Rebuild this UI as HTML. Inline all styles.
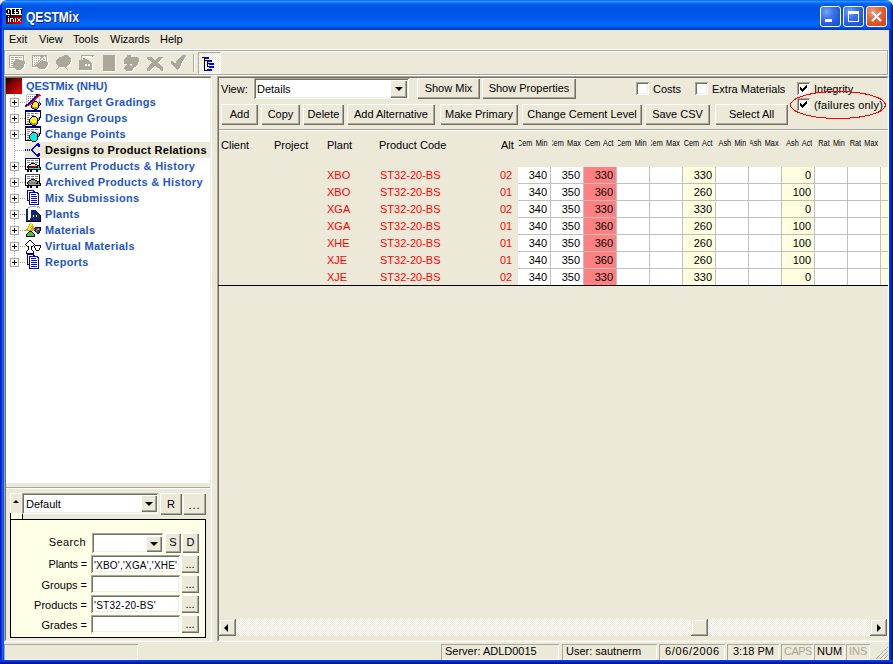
<!DOCTYPE html>
<html><head><meta charset="utf-8">
<style>
*{box-sizing:border-box;margin:0;padding:0}
html,body{width:893px;height:664px;overflow:hidden;background:#ECE9D8}
body{position:relative;font-family:"Liberation Sans",sans-serif;font-size:11px;color:#000}
.a{position:absolute}
.t{position:absolute;white-space:nowrap;line-height:13px}
/* XP button */
.btn{position:absolute;background:#ECE9D8;border:1px solid;border-color:#fff #716F64 #716F64 #fff;box-shadow:inset -1px -1px #ACA899;text-align:center;line-height:18px;white-space:nowrap}
.sunk{position:absolute;border:1px solid;border-color:#ACA899 #fff #fff #ACA899;}
.sunk>.in{position:absolute;left:0;top:0;right:0;bottom:0;border:1px solid;border-color:#716F64 #F1EFE2 #F1EFE2 #716F64;background:#fff}
.chk{position:absolute;width:13px;height:13px;border:1px solid #1C5180;background:#fff}

.ed{position:absolute;background:#fff;box-shadow:inset 1px 1px #ACA899,inset -1px -1px #fff,inset 2px 2px #716F64,inset -2px -2px #F1EFE2}
.rb{position:absolute;background:#ECE9D8;box-shadow:inset 1px 1px #fff,inset -1px -1px #716F64,inset -2px -2px #ACA899;text-align:center;white-space:nowrap}
.arr{position:absolute;width:0;height:0;border-left:4px solid transparent;border-right:4px solid transparent;border-top:4px solid #000}
.lab{position:absolute;white-space:nowrap;line-height:13px;text-align:right}

.cb{position:absolute;width:13px;height:13px;background:#fff;box-shadow:inset 1px 1px #ACA899,inset -1px -1px #fff,inset 2px 2px #716F64,inset -2px -2px #F1EFE2}

.sb{position:absolute;top:644px;height:16px;box-shadow:inset 1px 1px #ACA899,inset -1px -1px #fff;white-space:nowrap;line-height:14px;padding-left:4px}
.scb{position:absolute;background:#ECE9D8;box-shadow:inset -1px -1px #716F64,inset 1px 1px #ECE9D8,inset -2px -2px #ACA899,inset 2px 2px #fff}
</style></head><body>

<!-- window frame -->
<div class="a" style="left:0;top:30px;width:4px;height:634px;background:linear-gradient(to right,#0019CF 0,#0019CF 1px,#0831D9 1px,#0831D9 2px,#166AEE 2px,#166AEE 3px,#0855DD 3px)"></div>
<div class="a" style="left:889px;top:30px;width:4px;height:634px;background:linear-gradient(to right,#0040F0 0,#0040F0 1px,#0030D8 1px,#0030D8 2px,#001EA0 2px,#001EA0 3px,#00138C 3px)"></div>
<div class="a" style="left:0;top:660px;width:893px;height:4px;background:linear-gradient(to bottom,#0040F0 0,#0040F0 1px,#0035E0 1px,#0035E0 2px,#001EA0 2px,#001EA0 3px,#00138C 3px)"></div>

<!-- title bar -->
<div class="a" style="left:0;top:0;width:893px;height:30px;border-radius:7px 7px 0 0;background:linear-gradient(to bottom,#0058ee 0%,#3593ff 4%,#288eff 6%,#127dff 8%,#036ffc 10%,#0262ee 14%,#0057e5 20%,#0054e3 24%,#0055eb 56%,#005bf5 66%,#026afe 76%,#0062ef 86%,#0055E0 92%,#0044D0 95%,#0038C0 100%)"></div>
<div class="a" style="left:0;top:4px;width:3px;height:26px;border-top-left-radius:3px;background:linear-gradient(to right,#0022D2 0,#0022D2 2px,#0550E6 2px)"></div>
<div class="a" style="left:890px;top:4px;width:3px;height:26px;border-top-right-radius:3px;background:linear-gradient(to right,#0040E0 0,#0040E0 1px,#0028B8 1px,#0028B8 2px,#001890 2px)"></div>
<div id="title" class="t" style="left:26px;top:9px;font-size:14px;font-weight:bold;color:#fff;line-height:17px;text-shadow:1px 1px #0A1883;transform:scaleX(0.86);transform-origin:0 0">QESTMix</div>

<!-- title icon -->
<svg class="a" style="left:6px;top:8px" width="16" height="16" shape-rendering="crispEdges"><defs><linearGradient id="rg" x1="0" y1="0" x2="1" y2="1"><stop offset="0" stop-color="#100000"/><stop offset=".5" stop-color="#800000"/><stop offset="1" stop-color="#FF0000"/></linearGradient></defs><rect x="0" y="0" width="16" height="7" fill="#fff"/><rect x="0" y="7" width="16" height="9" fill="url(#rg)"/><rect x="1" y="1" width="1" height="1" fill="#000"/><rect x="2" y="1" width="1" height="1" fill="#000"/><rect x="3" y="1" width="1" height="1" fill="#000"/><rect x="6" y="1" width="1" height="1" fill="#000"/><rect x="7" y="1" width="1" height="1" fill="#000"/><rect x="8" y="1" width="1" height="1" fill="#000"/><rect x="10" y="1" width="1" height="1" fill="#000"/><rect x="11" y="1" width="1" height="1" fill="#000"/><rect x="12" y="1" width="1" height="1" fill="#000"/><rect x="14" y="1" width="1" height="1" fill="#000"/><rect x="15" y="1" width="1" height="1" fill="#000"/><rect x="0" y="2" width="1" height="1" fill="#000"/><rect x="1" y="2" width="1" height="1" fill="#000"/><rect x="3" y="2" width="1" height="1" fill="#000"/><rect x="4" y="2" width="1" height="1" fill="#000"/><rect x="6" y="2" width="1" height="1" fill="#000"/><rect x="7" y="2" width="1" height="1" fill="#000"/><rect x="10" y="2" width="1" height="1" fill="#000"/><rect x="11" y="2" width="1" height="1" fill="#000"/><rect x="15" y="2" width="1" height="1" fill="#000"/><rect x="0" y="3" width="1" height="1" fill="#000"/><rect x="1" y="3" width="1" height="1" fill="#000"/><rect x="3" y="3" width="1" height="1" fill="#000"/><rect x="4" y="3" width="1" height="1" fill="#000"/><rect x="6" y="3" width="1" height="1" fill="#000"/><rect x="7" y="3" width="1" height="1" fill="#000"/><rect x="8" y="3" width="1" height="1" fill="#000"/><rect x="10" y="3" width="1" height="1" fill="#000"/><rect x="11" y="3" width="1" height="1" fill="#000"/><rect x="12" y="3" width="1" height="1" fill="#000"/><rect x="15" y="3" width="1" height="1" fill="#000"/><rect x="0" y="4" width="1" height="1" fill="#000"/><rect x="1" y="4" width="1" height="1" fill="#000"/><rect x="3" y="4" width="1" height="1" fill="#000"/><rect x="4" y="4" width="1" height="1" fill="#000"/><rect x="6" y="4" width="1" height="1" fill="#000"/><rect x="7" y="4" width="1" height="1" fill="#000"/><rect x="12" y="4" width="1" height="1" fill="#000"/><rect x="15" y="4" width="1" height="1" fill="#000"/><rect x="1" y="5" width="1" height="1" fill="#000"/><rect x="2" y="5" width="1" height="1" fill="#000"/><rect x="3" y="5" width="1" height="1" fill="#000"/><rect x="4" y="5" width="1" height="1" fill="#000"/><rect x="6" y="5" width="1" height="1" fill="#000"/><rect x="7" y="5" width="1" height="1" fill="#000"/><rect x="8" y="5" width="1" height="1" fill="#000"/><rect x="10" y="5" width="1" height="1" fill="#000"/><rect x="11" y="5" width="1" height="1" fill="#000"/><rect x="12" y="5" width="1" height="1" fill="#000"/><rect x="15" y="5" width="1" height="1" fill="#000"/><rect x="4" y="6" width="1" height="1" fill="#000"/><rect x="2" y="8" width="1" height="1" fill="#fff"/><rect x="2" y="10" width="1" height="1" fill="#fff"/><rect x="4" y="10" width="1" height="1" fill="#fff"/><rect x="5" y="10" width="1" height="1" fill="#fff"/><rect x="6" y="10" width="1" height="1" fill="#fff"/><rect x="9" y="10" width="1" height="1" fill="#fff"/><rect x="11" y="10" width="1" height="1" fill="#fff"/><rect x="14" y="10" width="1" height="1" fill="#fff"/><rect x="2" y="11" width="1" height="1" fill="#fff"/><rect x="4" y="11" width="1" height="1" fill="#fff"/><rect x="7" y="11" width="1" height="1" fill="#fff"/><rect x="9" y="11" width="1" height="1" fill="#fff"/><rect x="12" y="11" width="1" height="1" fill="#fff"/><rect x="13" y="11" width="1" height="1" fill="#fff"/><rect x="2" y="12" width="1" height="1" fill="#fff"/><rect x="4" y="12" width="1" height="1" fill="#fff"/><rect x="7" y="12" width="1" height="1" fill="#fff"/><rect x="9" y="12" width="1" height="1" fill="#fff"/><rect x="12" y="12" width="1" height="1" fill="#fff"/><rect x="13" y="12" width="1" height="1" fill="#fff"/><rect x="2" y="13" width="1" height="1" fill="#fff"/><rect x="4" y="13" width="1" height="1" fill="#fff"/><rect x="7" y="13" width="1" height="1" fill="#fff"/><rect x="9" y="13" width="1" height="1" fill="#fff"/><rect x="11" y="13" width="1" height="1" fill="#fff"/><rect x="14" y="13" width="1" height="1" fill="#fff"/></svg>
<!-- title buttons -->
<div class="a" style="left:820px;top:6px;width:21px;height:21px;border:1px solid #fff;border-radius:3px;background:radial-gradient(circle at 30% 25%,#7AA6F8 0,#3C74EC 35%,#2258E0 70%,#1A4CD8 100%)">
  <div class="a" style="left:4px;top:12px;width:7px;height:3px;background:#fff"></div></div>
<div class="a" style="left:843px;top:6px;width:21px;height:21px;border:1px solid #fff;border-radius:3px;background:radial-gradient(circle at 30% 25%,#7AA6F8 0,#3C74EC 35%,#2258E0 70%,#1A4CD8 100%)">
  <div class="a" style="left:4px;top:4px;width:11px;height:11px;border:1px solid #fff;border-top-width:3px"></div></div>
<div class="a" style="left:866px;top:6px;width:21px;height:21px;border:1px solid #fff;border-radius:3px;background:radial-gradient(circle at 30% 25%,#F0A080 0,#E66A42 35%,#D8502A 70%,#C84420 100%)">
  <svg class="a" style="left:0;top:0" width="19" height="19"><path d="M5 5L14 14M14 5L5 14" stroke="#fff" stroke-width="2.2"/></svg></div>

<!-- menu -->
<div class="t" style="left:9px;top:33px">Exit</div>
<div class="t" style="left:39px;top:33px">View</div>
<div class="t" style="left:73px;top:33px">Tools</div>
<div class="t" style="left:110px;top:33px">Wizards</div>
<div class="t" style="left:160px;top:33px">Help</div>
<div class="a" style="left:4px;top:49px;width:885px;height:1px;background:#fff"></div>

<!-- toolbar -->
<div class="a" style="left:4px;top:50px;width:884px;height:25px;border:1px solid #ACA899;box-shadow:inset 1px 1px #fff,1px 1px #fff"></div>
<div class="a" style="left:198px;top:52px;width:23px;height:22px;border:1px solid;border-color:#ACA899 #fff #fff #ACA899;background-color:#F4F2E8;background-image:repeating-conic-gradient(#fff 0 25%,#ECE9D8 0 50%);background-size:2px 2px"></div>
<svg class="a" style="left:0;top:50px" width="230" height="26">
<g shape-rendering="crispEdges"><rect x="10" y="6" width="15" height="1" fill="#fff"/><rect x="10" y="7" width="15" height="1" fill="#fff"/><rect x="10" y="8" width="15" height="1" fill="#fff"/><rect x="10" y="9" width="15" height="1" fill="#fff"/><rect x="10" y="10" width="15" height="1" fill="#fff"/><rect x="10" y="11" width="15" height="1" fill="#fff"/><rect x="10" y="12" width="16" height="1" fill="#fff"/><rect x="10" y="13" width="16" height="1" fill="#fff"/><rect x="10" y="14" width="16" height="1" fill="#fff"/><rect x="10" y="15" width="15" height="1" fill="#fff"/><rect x="10" y="16" width="15" height="1" fill="#fff"/><rect x="10" y="17" width="15" height="1" fill="#fff"/><rect x="10" y="18" width="14" height="1" fill="#fff"/><rect x="16" y="19" width="7" height="1" fill="#fff"/><rect x="17" y="20" width="5" height="1" fill="#fff"/><rect x="9" y="5" width="15" height="1" fill="#ACA899"/><rect x="9" y="6" width="1" height="1" fill="#ACA899"/><rect x="10" y="6" width="13" height="1" fill="#fff"/><rect x="23" y="6" width="1" height="1" fill="#ACA899"/><rect x="9" y="7" width="1" height="1" fill="#ACA899"/><rect x="10" y="7" width="1" height="1" fill="#fff"/><rect x="11" y="7" width="3" height="1" fill="#ACA899"/><rect x="14" y="7" width="1" height="1" fill="#fff"/><rect x="15" y="7" width="3" height="1" fill="#ACA899"/><rect x="18" y="7" width="1" height="1" fill="#fff"/><rect x="19" y="7" width="3" height="1" fill="#ACA899"/><rect x="22" y="7" width="1" height="1" fill="#fff"/><rect x="23" y="7" width="1" height="1" fill="#ACA899"/><rect x="9" y="8" width="1" height="1" fill="#ACA899"/><rect x="10" y="8" width="13" height="1" fill="#fff"/><rect x="23" y="8" width="1" height="1" fill="#ACA899"/><rect x="9" y="9" width="1" height="1" fill="#ACA899"/><rect x="10" y="9" width="1" height="1" fill="#fff"/><rect x="11" y="9" width="3" height="1" fill="#ACA899"/><rect x="14" y="9" width="1" height="1" fill="#fff"/><rect x="15" y="9" width="4" height="1" fill="#ACA899"/><rect x="19" y="9" width="4" height="1" fill="#fff"/><rect x="23" y="9" width="1" height="1" fill="#ACA899"/><rect x="9" y="10" width="1" height="1" fill="#ACA899"/><rect x="10" y="10" width="5" height="1" fill="#fff"/><rect x="15" y="10" width="7" height="1" fill="#ACA899"/><rect x="22" y="10" width="1" height="1" fill="#fff"/><rect x="23" y="10" width="1" height="1" fill="#ACA899"/><rect x="9" y="11" width="1" height="1" fill="#ACA899"/><rect x="10" y="11" width="1" height="1" fill="#fff"/><rect x="11" y="11" width="2" height="1" fill="#ACA899"/><rect x="13" y="11" width="1" height="1" fill="#fff"/><rect x="14" y="11" width="11" height="1" fill="#ACA899"/><rect x="9" y="12" width="1" height="1" fill="#ACA899"/><rect x="10" y="12" width="3" height="1" fill="#fff"/><rect x="13" y="12" width="12" height="1" fill="#ACA899"/><rect x="9" y="13" width="1" height="1" fill="#ACA899"/><rect x="10" y="13" width="1" height="1" fill="#fff"/><rect x="11" y="13" width="14" height="1" fill="#ACA899"/><rect x="9" y="14" width="1" height="1" fill="#ACA899"/><rect x="10" y="14" width="3" height="1" fill="#fff"/><rect x="13" y="14" width="11" height="1" fill="#ACA899"/><rect x="9" y="15" width="1" height="1" fill="#ACA899"/><rect x="10" y="15" width="1" height="1" fill="#fff"/><rect x="11" y="15" width="13" height="1" fill="#ACA899"/><rect x="9" y="16" width="1" height="1" fill="#ACA899"/><rect x="10" y="16" width="3" height="1" fill="#fff"/><rect x="13" y="16" width="11" height="1" fill="#ACA899"/><rect x="9" y="17" width="14" height="1" fill="#ACA899"/><rect x="15" y="18" width="7" height="1" fill="#ACA899"/><rect x="16" y="19" width="5" height="1" fill="#ACA899"/><rect x="33" y="6" width="15" height="1" fill="#fff"/><rect x="33" y="7" width="15" height="1" fill="#fff"/><rect x="33" y="8" width="15" height="1" fill="#fff"/><rect x="33" y="9" width="15" height="1" fill="#fff"/><rect x="33" y="10" width="15" height="1" fill="#fff"/><rect x="33" y="11" width="15" height="1" fill="#fff"/><rect x="33" y="12" width="15" height="1" fill="#fff"/><rect x="33" y="13" width="16" height="1" fill="#fff"/><rect x="33" y="14" width="16" height="1" fill="#fff"/><rect x="33" y="15" width="16" height="1" fill="#fff"/><rect x="33" y="16" width="15" height="1" fill="#fff"/><rect x="33" y="17" width="15" height="1" fill="#fff"/><rect x="39" y="18" width="8" height="1" fill="#fff"/><rect x="40" y="19" width="6" height="1" fill="#fff"/><rect x="32" y="5" width="15" height="1" fill="#ACA899"/><rect x="32" y="6" width="1" height="1" fill="#ACA899"/><rect x="33" y="6" width="1" height="1" fill="#fff"/><rect x="34" y="6" width="1" height="1" fill="#ACA899"/><rect x="35" y="6" width="1" height="1" fill="#fff"/><rect x="36" y="6" width="1" height="1" fill="#ACA899"/><rect x="37" y="6" width="1" height="1" fill="#fff"/><rect x="38" y="6" width="1" height="1" fill="#ACA899"/><rect x="39" y="6" width="1" height="1" fill="#fff"/><rect x="40" y="6" width="4" height="1" fill="#ACA899"/><rect x="44" y="6" width="1" height="1" fill="#fff"/><rect x="45" y="6" width="2" height="1" fill="#ACA899"/><rect x="32" y="7" width="1" height="1" fill="#ACA899"/><rect x="33" y="7" width="8" height="1" fill="#fff"/><rect x="41" y="7" width="2" height="1" fill="#ACA899"/><rect x="43" y="7" width="3" height="1" fill="#fff"/><rect x="46" y="7" width="1" height="1" fill="#ACA899"/><rect x="32" y="8" width="1" height="1" fill="#ACA899"/><rect x="33" y="8" width="1" height="1" fill="#fff"/><rect x="34" y="8" width="1" height="1" fill="#ACA899"/><rect x="35" y="8" width="1" height="1" fill="#fff"/><rect x="36" y="8" width="1" height="1" fill="#ACA899"/><rect x="37" y="8" width="1" height="1" fill="#fff"/><rect x="38" y="8" width="1" height="1" fill="#ACA899"/><rect x="39" y="8" width="1" height="1" fill="#fff"/><rect x="40" y="8" width="2" height="1" fill="#ACA899"/><rect x="42" y="8" width="1" height="1" fill="#fff"/><rect x="43" y="8" width="1" height="1" fill="#ACA899"/><rect x="44" y="8" width="2" height="1" fill="#fff"/><rect x="46" y="8" width="1" height="1" fill="#ACA899"/><rect x="32" y="9" width="1" height="1" fill="#ACA899"/><rect x="33" y="9" width="7" height="1" fill="#fff"/><rect x="40" y="9" width="1" height="1" fill="#ACA899"/><rect x="41" y="9" width="2" height="1" fill="#fff"/><rect x="43" y="9" width="2" height="1" fill="#ACA899"/><rect x="45" y="9" width="1" height="1" fill="#fff"/><rect x="46" y="9" width="1" height="1" fill="#ACA899"/><rect x="32" y="10" width="1" height="1" fill="#ACA899"/><rect x="33" y="10" width="1" height="1" fill="#fff"/><rect x="34" y="10" width="1" height="1" fill="#ACA899"/><rect x="35" y="10" width="1" height="1" fill="#fff"/><rect x="36" y="10" width="1" height="1" fill="#ACA899"/><rect x="37" y="10" width="1" height="1" fill="#fff"/><rect x="38" y="10" width="2" height="1" fill="#ACA899"/><rect x="40" y="10" width="1" height="1" fill="#fff"/><rect x="41" y="10" width="2" height="1" fill="#ACA899"/><rect x="43" y="10" width="3" height="1" fill="#fff"/><rect x="46" y="10" width="1" height="1" fill="#ACA899"/><rect x="32" y="11" width="1" height="1" fill="#ACA899"/><rect x="33" y="11" width="5" height="1" fill="#fff"/><rect x="38" y="11" width="1" height="1" fill="#ACA899"/><rect x="39" y="11" width="1" height="1" fill="#fff"/><rect x="40" y="11" width="7" height="1" fill="#ACA899"/><rect x="32" y="12" width="1" height="1" fill="#ACA899"/><rect x="33" y="12" width="1" height="1" fill="#fff"/><rect x="34" y="12" width="1" height="1" fill="#ACA899"/><rect x="35" y="12" width="1" height="1" fill="#fff"/><rect x="36" y="12" width="2" height="1" fill="#ACA899"/><rect x="38" y="12" width="1" height="1" fill="#fff"/><rect x="39" y="12" width="9" height="1" fill="#ACA899"/><rect x="32" y="13" width="1" height="1" fill="#ACA899"/><rect x="33" y="13" width="2" height="1" fill="#fff"/><rect x="35" y="13" width="1" height="1" fill="#ACA899"/><rect x="36" y="13" width="1" height="1" fill="#fff"/><rect x="37" y="13" width="11" height="1" fill="#ACA899"/><rect x="32" y="14" width="1" height="1" fill="#ACA899"/><rect x="33" y="14" width="1" height="1" fill="#fff"/><rect x="34" y="14" width="1" height="1" fill="#ACA899"/><rect x="35" y="14" width="1" height="1" fill="#fff"/><rect x="36" y="14" width="12" height="1" fill="#ACA899"/><rect x="32" y="15" width="1" height="1" fill="#ACA899"/><rect x="33" y="15" width="2" height="1" fill="#fff"/><rect x="35" y="15" width="12" height="1" fill="#ACA899"/><rect x="32" y="16" width="15" height="1" fill="#ACA899"/><rect x="38" y="17" width="8" height="1" fill="#ACA899"/><rect x="39" y="18" width="6" height="1" fill="#ACA899"/><rect x="65" y="6" width="4" height="1" fill="#fff"/><rect x="63" y="7" width="7" height="1" fill="#fff"/><rect x="60" y="8" width="11" height="1" fill="#fff"/><rect x="59" y="9" width="13" height="1" fill="#fff"/><rect x="58" y="10" width="14" height="1" fill="#fff"/><rect x="57" y="11" width="15" height="1" fill="#fff"/><rect x="57" y="12" width="15" height="1" fill="#fff"/><rect x="57" y="13" width="14" height="1" fill="#fff"/><rect x="57" y="14" width="14" height="1" fill="#fff"/><rect x="58" y="15" width="12" height="1" fill="#fff"/><rect x="59" y="16" width="10" height="1" fill="#fff"/><rect x="59" y="17" width="9" height="1" fill="#fff"/><rect x="59" y="18" width="1" height="1" fill="#fff"/><rect x="66" y="18" width="1" height="1" fill="#fff"/><rect x="58" y="19" width="1" height="1" fill="#fff"/><rect x="67" y="19" width="1" height="1" fill="#fff"/><rect x="57" y="20" width="1" height="1" fill="#fff"/><rect x="68" y="20" width="1" height="1" fill="#fff"/><rect x="64" y="5" width="4" height="1" fill="#ACA899"/><rect x="62" y="6" width="7" height="1" fill="#ACA899"/><rect x="59" y="7" width="11" height="1" fill="#ACA899"/><rect x="58" y="8" width="13" height="1" fill="#ACA899"/><rect x="57" y="9" width="14" height="1" fill="#ACA899"/><rect x="56" y="10" width="15" height="1" fill="#ACA899"/><rect x="56" y="11" width="15" height="1" fill="#ACA899"/><rect x="56" y="12" width="14" height="1" fill="#ACA899"/><rect x="56" y="13" width="14" height="1" fill="#ACA899"/><rect x="57" y="14" width="12" height="1" fill="#ACA899"/><rect x="58" y="15" width="10" height="1" fill="#ACA899"/><rect x="58" y="16" width="9" height="1" fill="#ACA899"/><rect x="58" y="17" width="1" height="1" fill="#ACA899"/><rect x="65" y="17" width="1" height="1" fill="#ACA899"/><rect x="57" y="18" width="1" height="1" fill="#ACA899"/><rect x="66" y="18" width="1" height="1" fill="#ACA899"/><rect x="56" y="19" width="1" height="1" fill="#ACA899"/><rect x="67" y="19" width="1" height="1" fill="#ACA899"/><rect x="82" y="6" width="13" height="1" fill="#fff"/><rect x="82" y="7" width="12" height="1" fill="#fff"/><rect x="82" y="8" width="1" height="1" fill="#fff"/><rect x="82" y="9" width="1" height="1" fill="#fff"/><rect x="84" y="9" width="2" height="1" fill="#fff"/><rect x="82" y="10" width="1" height="1" fill="#fff"/><rect x="84" y="10" width="4" height="1" fill="#fff"/><rect x="80" y="11" width="10" height="1" fill="#fff"/><rect x="80" y="12" width="11" height="1" fill="#fff"/><rect x="80" y="13" width="12" height="1" fill="#fff"/><rect x="80" y="14" width="13" height="1" fill="#fff"/><rect x="80" y="15" width="13" height="1" fill="#fff"/><rect x="80" y="16" width="13" height="1" fill="#fff"/><rect x="80" y="17" width="13" height="1" fill="#fff"/><rect x="80" y="18" width="13" height="1" fill="#fff"/><rect x="80" y="19" width="13" height="1" fill="#fff"/><rect x="80" y="20" width="13" height="1" fill="#fff"/><rect x="81" y="5" width="13" height="1" fill="#ACA899"/><rect x="81" y="6" width="1" height="1" fill="#ACA899"/><rect x="82" y="6" width="10" height="1" fill="#fff"/><rect x="92" y="6" width="1" height="1" fill="#ACA899"/><rect x="81" y="7" width="1" height="1" fill="#ACA899"/><rect x="81" y="8" width="1" height="1" fill="#ACA899"/><rect x="83" y="8" width="2" height="1" fill="#ACA899"/><rect x="81" y="9" width="1" height="1" fill="#ACA899"/><rect x="83" y="9" width="4" height="1" fill="#ACA899"/><rect x="79" y="10" width="10" height="1" fill="#ACA899"/><rect x="79" y="11" width="11" height="1" fill="#ACA899"/><rect x="79" y="12" width="12" height="1" fill="#ACA899"/><rect x="79" y="13" width="13" height="1" fill="#ACA899"/><rect x="79" y="14" width="6" height="1" fill="#ACA899"/><rect x="85" y="14" width="2" height="1" fill="#fff"/><rect x="87" y="14" width="1" height="1" fill="#ACA899"/><rect x="88" y="14" width="2" height="1" fill="#fff"/><rect x="90" y="14" width="2" height="1" fill="#ACA899"/><rect x="79" y="15" width="6" height="1" fill="#ACA899"/><rect x="85" y="15" width="2" height="1" fill="#fff"/><rect x="87" y="15" width="1" height="1" fill="#ACA899"/><rect x="88" y="15" width="2" height="1" fill="#fff"/><rect x="90" y="15" width="2" height="1" fill="#ACA899"/><rect x="79" y="16" width="13" height="1" fill="#ACA899"/><rect x="79" y="17" width="13" height="1" fill="#ACA899"/><rect x="79" y="18" width="13" height="1" fill="#ACA899"/><rect x="79" y="19" width="13" height="1" fill="#ACA899"/><rect x="104" y="6" width="12" height="1" fill="#fff"/><rect x="104" y="7" width="12" height="1" fill="#fff"/><rect x="104" y="8" width="12" height="1" fill="#fff"/><rect x="104" y="9" width="12" height="1" fill="#fff"/><rect x="104" y="10" width="12" height="1" fill="#fff"/><rect x="104" y="11" width="12" height="1" fill="#fff"/><rect x="104" y="12" width="12" height="1" fill="#fff"/><rect x="104" y="13" width="12" height="1" fill="#fff"/><rect x="104" y="14" width="12" height="1" fill="#fff"/><rect x="104" y="15" width="12" height="1" fill="#fff"/><rect x="104" y="16" width="12" height="1" fill="#fff"/><rect x="104" y="17" width="12" height="1" fill="#fff"/><rect x="104" y="18" width="12" height="1" fill="#fff"/><rect x="104" y="19" width="12" height="1" fill="#fff"/><rect x="104" y="20" width="12" height="1" fill="#fff"/><rect x="104" y="21" width="12" height="1" fill="#fff"/><rect x="103" y="5" width="12" height="1" fill="#ACA899"/><rect x="103" y="6" width="12" height="1" fill="#ACA899"/><rect x="103" y="7" width="12" height="1" fill="#ACA899"/><rect x="103" y="8" width="12" height="1" fill="#ACA899"/><rect x="103" y="9" width="12" height="1" fill="#ACA899"/><rect x="103" y="10" width="12" height="1" fill="#ACA899"/><rect x="103" y="11" width="12" height="1" fill="#ACA899"/><rect x="103" y="12" width="12" height="1" fill="#ACA899"/><rect x="103" y="13" width="12" height="1" fill="#ACA899"/><rect x="103" y="14" width="12" height="1" fill="#ACA899"/><rect x="103" y="15" width="12" height="1" fill="#ACA899"/><rect x="103" y="16" width="12" height="1" fill="#ACA899"/><rect x="103" y="17" width="12" height="1" fill="#ACA899"/><rect x="103" y="18" width="12" height="1" fill="#ACA899"/><rect x="103" y="19" width="12" height="1" fill="#ACA899"/><rect x="103" y="20" width="12" height="1" fill="#ACA899"/><rect x="128" y="6" width="4" height="1" fill="#fff"/><rect x="128" y="7" width="4" height="1" fill="#fff"/><rect x="127" y="8" width="12" height="1" fill="#fff"/><rect x="126" y="9" width="14" height="1" fill="#fff"/><rect x="125" y="10" width="15" height="1" fill="#fff"/><rect x="125" y="11" width="15" height="1" fill="#fff"/><rect x="125" y="12" width="15" height="1" fill="#fff"/><rect x="125" y="13" width="14" height="1" fill="#fff"/><rect x="125" y="14" width="14" height="1" fill="#fff"/><rect x="128" y="15" width="3" height="1" fill="#fff"/><rect x="133" y="15" width="6" height="1" fill="#fff"/><rect x="127" y="16" width="5" height="1" fill="#fff"/><rect x="133" y="16" width="5" height="1" fill="#fff"/><rect x="126" y="17" width="11" height="1" fill="#fff"/><rect x="125" y="18" width="10" height="1" fill="#fff"/><rect x="125" y="19" width="9" height="1" fill="#fff"/><rect x="126" y="20" width="8" height="1" fill="#fff"/><rect x="127" y="21" width="6" height="1" fill="#fff"/><rect x="127" y="5" width="4" height="1" fill="#ACA899"/><rect x="127" y="6" width="4" height="1" fill="#ACA899"/><rect x="126" y="7" width="12" height="1" fill="#ACA899"/><rect x="125" y="8" width="14" height="1" fill="#ACA899"/><rect x="124" y="9" width="15" height="1" fill="#ACA899"/><rect x="124" y="10" width="15" height="1" fill="#ACA899"/><rect x="124" y="11" width="15" height="1" fill="#ACA899"/><rect x="124" y="12" width="14" height="1" fill="#ACA899"/><rect x="124" y="13" width="14" height="1" fill="#ACA899"/><rect x="127" y="14" width="3" height="1" fill="#ACA899"/><rect x="132" y="14" width="6" height="1" fill="#ACA899"/><rect x="126" y="15" width="5" height="1" fill="#ACA899"/><rect x="132" y="15" width="5" height="1" fill="#ACA899"/><rect x="125" y="16" width="11" height="1" fill="#ACA899"/><rect x="124" y="17" width="10" height="1" fill="#ACA899"/><rect x="124" y="18" width="9" height="1" fill="#ACA899"/><rect x="125" y="19" width="8" height="1" fill="#ACA899"/><rect x="126" y="20" width="6" height="1" fill="#ACA899"/><rect x="148" y="8" width="5" height="1" fill="#fff"/><rect x="159" y="8" width="5" height="1" fill="#fff"/><rect x="148" y="9" width="6" height="1" fill="#fff"/><rect x="158" y="9" width="5" height="1" fill="#fff"/><rect x="149" y="10" width="6" height="1" fill="#fff"/><rect x="157" y="10" width="5" height="1" fill="#fff"/><rect x="151" y="11" width="10" height="1" fill="#fff"/><rect x="152" y="12" width="8" height="1" fill="#fff"/><rect x="153" y="13" width="6" height="1" fill="#fff"/><rect x="152" y="14" width="8" height="1" fill="#fff"/><rect x="151" y="15" width="10" height="1" fill="#fff"/><rect x="150" y="16" width="12" height="1" fill="#fff"/><rect x="150" y="17" width="5" height="1" fill="#fff"/><rect x="157" y="17" width="6" height="1" fill="#fff"/><rect x="149" y="18" width="5" height="1" fill="#fff"/><rect x="158" y="18" width="6" height="1" fill="#fff"/><rect x="148" y="19" width="5" height="1" fill="#fff"/><rect x="160" y="19" width="4" height="1" fill="#fff"/><rect x="148" y="20" width="4" height="1" fill="#fff"/><rect x="161" y="20" width="3" height="1" fill="#fff"/><rect x="148" y="21" width="3" height="1" fill="#fff"/><rect x="162" y="21" width="2" height="1" fill="#fff"/><rect x="147" y="7" width="5" height="1" fill="#ACA899"/><rect x="158" y="7" width="5" height="1" fill="#ACA899"/><rect x="147" y="8" width="6" height="1" fill="#ACA899"/><rect x="157" y="8" width="5" height="1" fill="#ACA899"/><rect x="148" y="9" width="6" height="1" fill="#ACA899"/><rect x="156" y="9" width="5" height="1" fill="#ACA899"/><rect x="150" y="10" width="10" height="1" fill="#ACA899"/><rect x="151" y="11" width="8" height="1" fill="#ACA899"/><rect x="152" y="12" width="6" height="1" fill="#ACA899"/><rect x="151" y="13" width="8" height="1" fill="#ACA899"/><rect x="150" y="14" width="10" height="1" fill="#ACA899"/><rect x="149" y="15" width="12" height="1" fill="#ACA899"/><rect x="149" y="16" width="5" height="1" fill="#ACA899"/><rect x="156" y="16" width="6" height="1" fill="#ACA899"/><rect x="148" y="17" width="5" height="1" fill="#ACA899"/><rect x="157" y="17" width="6" height="1" fill="#ACA899"/><rect x="147" y="18" width="5" height="1" fill="#ACA899"/><rect x="159" y="18" width="4" height="1" fill="#ACA899"/><rect x="147" y="19" width="4" height="1" fill="#ACA899"/><rect x="160" y="19" width="3" height="1" fill="#ACA899"/><rect x="147" y="20" width="3" height="1" fill="#ACA899"/><rect x="161" y="20" width="2" height="1" fill="#ACA899"/><rect x="183" y="6" width="4" height="1" fill="#fff"/><rect x="182" y="7" width="5" height="1" fill="#fff"/><rect x="181" y="8" width="5" height="1" fill="#fff"/><rect x="180" y="9" width="5" height="1" fill="#fff"/><rect x="179" y="10" width="6" height="1" fill="#fff"/><rect x="178" y="11" width="6" height="1" fill="#fff"/><rect x="172" y="12" width="2" height="1" fill="#fff"/><rect x="177" y="12" width="6" height="1" fill="#fff"/><rect x="172" y="13" width="3" height="1" fill="#fff"/><rect x="177" y="13" width="6" height="1" fill="#fff"/><rect x="172" y="14" width="10" height="1" fill="#fff"/><rect x="173" y="15" width="9" height="1" fill="#fff"/><rect x="174" y="16" width="8" height="1" fill="#fff"/><rect x="175" y="17" width="6" height="1" fill="#fff"/><rect x="176" y="18" width="5" height="1" fill="#fff"/><rect x="177" y="19" width="3" height="1" fill="#fff"/><rect x="178" y="20" width="1" height="1" fill="#fff"/><rect x="182" y="5" width="4" height="1" fill="#ACA899"/><rect x="181" y="6" width="5" height="1" fill="#ACA899"/><rect x="180" y="7" width="5" height="1" fill="#ACA899"/><rect x="179" y="8" width="5" height="1" fill="#ACA899"/><rect x="178" y="9" width="6" height="1" fill="#ACA899"/><rect x="177" y="10" width="6" height="1" fill="#ACA899"/><rect x="171" y="11" width="2" height="1" fill="#ACA899"/><rect x="176" y="11" width="6" height="1" fill="#ACA899"/><rect x="171" y="12" width="3" height="1" fill="#ACA899"/><rect x="176" y="12" width="6" height="1" fill="#ACA899"/><rect x="171" y="13" width="10" height="1" fill="#ACA899"/><rect x="172" y="14" width="9" height="1" fill="#ACA899"/><rect x="173" y="15" width="8" height="1" fill="#ACA899"/><rect x="174" y="16" width="6" height="1" fill="#ACA899"/><rect x="175" y="17" width="5" height="1" fill="#ACA899"/><rect x="176" y="18" width="3" height="1" fill="#ACA899"/><rect x="177" y="19" width="1" height="1" fill="#ACA899"/></g>
<rect x="193" y="4" width="1" height="18" fill="#ACA899"/><rect x="194" y="4" width="1" height="18" fill="#fff"/>
<g>
 <rect x="202" y="7" width="3" height="1" fill="#000"/><rect x="204" y="7" width="1" height="14" fill="#000"/>
 <rect x="205" y="7" width="4" height="2" fill="#0000FF"/>
 <rect x="205" y="10" width="2" height="1" fill="#000"/><rect x="207" y="10" width="5" height="2" fill="#0000FF"/>
 <rect x="207" y="11" width="1" height="6" fill="#000"/><rect x="208" y="13" width="1" height="1" fill="#000"/>
 <rect x="209" y="13" width="5" height="2" fill="#0000FF"/>
 <rect x="208" y="16" width="1" height="1" fill="#000"/><rect x="209" y="16" width="5" height="2" fill="#0000FF"/>
 <rect x="205" y="20" width="2" height="1" fill="#000"/><rect x="207" y="19" width="5" height="2" fill="#0000FF"/>
</g>
</svg>

<!-- left tree panel -->
<div class="sunk" style="left:4px;top:76px;width:208px;height:566px"><div class="in" style="background:#ECE9D8"></div></div>
<div class="a" style="left:6px;top:78px;width:204px;height:405px;background:#fff"></div>
<div class="a" style="left:6px;top:487px;width:204px;height:1px;background:#ACA899"></div>
<div class="a" style="left:6px;top:488px;width:204px;height:1px;background:#fff"></div>

<!-- tree -->
<div class="a" style="left:6px;top:78px;width:16px;height:16px;background:linear-gradient(135deg,#000 0%,#700000 30%,#A80000 60%,#FF0000 100%)"></div>
<div class="t" style="left:26px;top:78px;line-height:16px;font-weight:bold;letter-spacing:-0.1px;color:#1E55C4">QESTMix (NHU)</div>
<div class="a" style="left:14px;top:95px;width:1px;height:168px;background:repeating-linear-gradient(to bottom,#A0A0A0 0,#A0A0A0 1px,transparent 1px,transparent 2px)"></div>
<div class="a" style="left:10px;top:98px;width:9px;height:9px;border:1px solid #ACA899;background:#fff"><div class="a" style="left:1px;top:3px;width:5px;height:1px;background:#000"></div><div class="a" style="left:3px;top:1px;width:1px;height:5px;background:#000"></div></div>
<div class="a" style="left:20px;top:102px;width:5px;height:1px;background:repeating-linear-gradient(to right,#A0A0A0 0,#A0A0A0 1px,transparent 1px,transparent 2px)"></div>
<svg class="a" style="left:25px;top:94px" width="16" height="16" shape-rendering="crispEdges"><rect x="2" y="0" width="9" height="1" fill="#C0C0C0"/><rect x="11" y="0" width="2" height="1" fill="#000080"/><rect x="13" y="0" width="2" height="1" fill="#FF0000"/><rect x="1" y="1" width="1" height="1" fill="#C0C0C0"/><rect x="2" y="1" width="9" height="1" fill="#fff"/><rect x="11" y="1" width="2" height="1" fill="#0000E0"/><rect x="13" y="1" width="3" height="1" fill="#FF0000"/><rect x="1" y="2" width="1" height="1" fill="#C0C0C0"/><rect x="2" y="2" width="1" height="1" fill="#fff"/><rect x="3" y="2" width="1" height="1" fill="#808080"/><rect x="4" y="2" width="1" height="1" fill="#fff"/><rect x="5" y="2" width="1" height="1" fill="#808080"/><rect x="6" y="2" width="1" height="1" fill="#fff"/><rect x="7" y="2" width="1" height="1" fill="#808080"/><rect x="8" y="2" width="1" height="1" fill="#fff"/><rect x="9" y="2" width="1" height="1" fill="#808080"/><rect x="10" y="2" width="2" height="1" fill="#0000E0"/><rect x="12" y="2" width="2" height="1" fill="#FF0000"/><rect x="14" y="2" width="1" height="1" fill="#fff"/><rect x="1" y="3" width="1" height="1" fill="#C0C0C0"/><rect x="2" y="3" width="7" height="1" fill="#fff"/><rect x="9" y="3" width="2" height="1" fill="#0000E0"/><rect x="11" y="3" width="2" height="1" fill="#FF0000"/><rect x="13" y="3" width="1" height="1" fill="#fff"/><rect x="14" y="3" width="1" height="1" fill="#C0C0C0"/><rect x="1" y="4" width="1" height="1" fill="#C0C0C0"/><rect x="2" y="4" width="1" height="1" fill="#fff"/><rect x="3" y="4" width="1" height="1" fill="#808080"/><rect x="4" y="4" width="1" height="1" fill="#fff"/><rect x="5" y="4" width="1" height="1" fill="#808080"/><rect x="6" y="4" width="1" height="1" fill="#fff"/><rect x="7" y="4" width="1" height="1" fill="#808080"/><rect x="8" y="4" width="2" height="1" fill="#0000E0"/><rect x="10" y="4" width="2" height="1" fill="#FF0000"/><rect x="12" y="4" width="2" height="1" fill="#fff"/><rect x="14" y="4" width="1" height="1" fill="#C0C0C0"/><rect x="1" y="5" width="1" height="1" fill="#C0C0C0"/><rect x="2" y="5" width="5" height="1" fill="#fff"/><rect x="7" y="5" width="2" height="1" fill="#0000E0"/><rect x="9" y="5" width="2" height="1" fill="#FF0000"/><rect x="11" y="5" width="3" height="1" fill="#fff"/><rect x="14" y="5" width="1" height="1" fill="#C0C0C0"/><rect x="1" y="6" width="1" height="1" fill="#C0C0C0"/><rect x="2" y="6" width="1" height="1" fill="#fff"/><rect x="3" y="6" width="1" height="1" fill="#808080"/><rect x="4" y="6" width="1" height="1" fill="#fff"/><rect x="5" y="6" width="1" height="1" fill="#808080"/><rect x="6" y="6" width="2" height="1" fill="#0000E0"/><rect x="8" y="6" width="2" height="1" fill="#FF0000"/><rect x="10" y="6" width="4" height="1" fill="#fff"/><rect x="14" y="6" width="1" height="1" fill="#C0C0C0"/><rect x="1" y="7" width="1" height="1" fill="#C0C0C0"/><rect x="2" y="7" width="3" height="1" fill="#fff"/><rect x="5" y="7" width="2" height="1" fill="#0000E0"/><rect x="7" y="7" width="2" height="1" fill="#FF0000"/><rect x="9" y="7" width="3" height="1" fill="#000"/><rect x="12" y="7" width="1" height="1" fill="#fff"/><rect x="13" y="7" width="2" height="1" fill="#C0C0C0"/><rect x="1" y="8" width="1" height="1" fill="#C0C0C0"/><rect x="2" y="8" width="1" height="1" fill="#fff"/><rect x="3" y="8" width="1" height="1" fill="#808080"/><rect x="4" y="8" width="2" height="1" fill="#0000E0"/><rect x="6" y="8" width="2" height="1" fill="#FF0000"/><rect x="8" y="8" width="1" height="1" fill="#000"/><rect x="9" y="8" width="3" height="1" fill="#F8F020"/><rect x="12" y="8" width="1" height="1" fill="#000"/><rect x="13" y="8" width="1" height="1" fill="#F0E8C8"/><rect x="14" y="8" width="1" height="1" fill="#000"/><rect x="1" y="9" width="1" height="1" fill="#C0C0C0"/><rect x="2" y="9" width="1" height="1" fill="#fff"/><rect x="3" y="9" width="2" height="1" fill="#0000E0"/><rect x="5" y="9" width="2" height="1" fill="#FF0000"/><rect x="7" y="9" width="1" height="1" fill="#000"/><rect x="8" y="9" width="5" height="1" fill="#F8F020"/><rect x="13" y="9" width="1" height="1" fill="#000"/><rect x="14" y="9" width="1" height="1" fill="#A0A0A0"/><rect x="15" y="9" width="1" height="1" fill="#000"/><rect x="1" y="10" width="1" height="1" fill="#780020"/><rect x="2" y="10" width="2" height="1" fill="#0000E0"/><rect x="4" y="10" width="2" height="1" fill="#FF0000"/><rect x="6" y="10" width="1" height="1" fill="#fff"/><rect x="7" y="10" width="1" height="1" fill="#000"/><rect x="8" y="10" width="5" height="1" fill="#F8F020"/><rect x="13" y="10" width="1" height="1" fill="#000"/><rect x="14" y="10" width="1" height="1" fill="#C0C0C0"/><rect x="15" y="10" width="1" height="1" fill="#000"/><rect x="0" y="11" width="2" height="1" fill="#0000E0"/><rect x="2" y="11" width="2" height="1" fill="#FF0000"/><rect x="6" y="11" width="1" height="1" fill="#000"/><rect x="7" y="11" width="6" height="1" fill="#F8F020"/><rect x="13" y="11" width="2" height="1" fill="#000"/><rect x="0" y="12" width="2" height="1" fill="#FF0000"/><rect x="6" y="12" width="1" height="1" fill="#000"/><rect x="7" y="12" width="1" height="1" fill="#B89810"/><rect x="8" y="12" width="5" height="1" fill="#F8F020"/><rect x="13" y="12" width="1" height="1" fill="#000"/><rect x="6" y="13" width="1" height="1" fill="#000"/><rect x="7" y="13" width="6" height="1" fill="#B89810"/><rect x="13" y="13" width="1" height="1" fill="#000"/><rect x="7" y="14" width="2" height="1" fill="#000"/><rect x="9" y="14" width="3" height="1" fill="#B89810"/><rect x="12" y="14" width="1" height="1" fill="#000"/><rect x="9" y="15" width="3" height="1" fill="#000"/></svg>
<div class="t" style="left:45px;top:94px;line-height:16px;font-weight:bold;letter-spacing:0.3px;color:#1E55C4">Mix Target Gradings</div>
<div class="a" style="left:10px;top:114px;width:9px;height:9px;border:1px solid #ACA899;background:#fff"><div class="a" style="left:1px;top:3px;width:5px;height:1px;background:#000"></div><div class="a" style="left:3px;top:1px;width:1px;height:5px;background:#000"></div></div>
<div class="a" style="left:20px;top:118px;width:5px;height:1px;background:repeating-linear-gradient(to right,#A0A0A0 0,#A0A0A0 1px,transparent 1px,transparent 2px)"></div>
<svg class="a" style="left:25px;top:110px" width="16" height="16" shape-rendering="crispEdges"><rect x="0" y="0" width="16" height="1" fill="#000080"/><rect x="0" y="1" width="16" height="1" fill="#000080"/><rect x="0" y="2" width="1" height="1" fill="#000"/><rect x="1" y="2" width="14" height="1" fill="#fff"/><rect x="15" y="2" width="1" height="1" fill="#000"/><rect x="0" y="3" width="1" height="1" fill="#000"/><rect x="1" y="3" width="1" height="1" fill="#fff"/><rect x="2" y="3" width="3" height="1" fill="#808080"/><rect x="5" y="3" width="1" height="1" fill="#fff"/><rect x="6" y="3" width="3" height="1" fill="#808080"/><rect x="9" y="3" width="1" height="1" fill="#fff"/><rect x="10" y="3" width="3" height="1" fill="#808080"/><rect x="13" y="3" width="2" height="1" fill="#fff"/><rect x="15" y="3" width="1" height="1" fill="#000"/><rect x="0" y="4" width="1" height="1" fill="#000"/><rect x="1" y="4" width="14" height="1" fill="#fff"/><rect x="15" y="4" width="1" height="1" fill="#000"/><rect x="0" y="5" width="1" height="1" fill="#000"/><rect x="1" y="5" width="1" height="1" fill="#fff"/><rect x="2" y="5" width="3" height="1" fill="#808080"/><rect x="5" y="5" width="1" height="1" fill="#fff"/><rect x="6" y="5" width="3" height="1" fill="#808080"/><rect x="9" y="5" width="6" height="1" fill="#fff"/><rect x="15" y="5" width="1" height="1" fill="#000"/><rect x="0" y="6" width="1" height="1" fill="#000"/><rect x="1" y="6" width="6" height="1" fill="#fff"/><rect x="7" y="6" width="4" height="1" fill="#000"/><rect x="11" y="6" width="1" height="1" fill="#fff"/><rect x="12" y="6" width="2" height="1" fill="#F0E8C8"/><rect x="14" y="6" width="1" height="1" fill="#fff"/><rect x="15" y="6" width="1" height="1" fill="#000"/><rect x="0" y="7" width="1" height="1" fill="#000"/><rect x="1" y="7" width="1" height="1" fill="#fff"/><rect x="2" y="7" width="2" height="1" fill="#808080"/><rect x="4" y="7" width="2" height="1" fill="#fff"/><rect x="6" y="7" width="1" height="1" fill="#000"/><rect x="7" y="7" width="4" height="1" fill="#F8F020"/><rect x="11" y="7" width="1" height="1" fill="#000"/><rect x="12" y="7" width="2" height="1" fill="#F0E8C8"/><rect x="14" y="7" width="2" height="1" fill="#000"/><rect x="0" y="8" width="1" height="1" fill="#000"/><rect x="1" y="8" width="4" height="1" fill="#fff"/><rect x="5" y="8" width="1" height="1" fill="#000"/><rect x="6" y="8" width="6" height="1" fill="#F8F020"/><rect x="12" y="8" width="1" height="1" fill="#000"/><rect x="13" y="8" width="1" height="1" fill="#A0A0A0"/><rect x="14" y="8" width="1" height="1" fill="#000"/><rect x="0" y="9" width="1" height="1" fill="#000"/><rect x="1" y="9" width="1" height="1" fill="#fff"/><rect x="2" y="9" width="2" height="1" fill="#808080"/><rect x="4" y="9" width="1" height="1" fill="#000"/><rect x="5" y="9" width="7" height="1" fill="#F8F020"/><rect x="12" y="9" width="1" height="1" fill="#000"/><rect x="13" y="9" width="1" height="1" fill="#A0A0A0"/><rect x="14" y="9" width="1" height="1" fill="#000"/><rect x="0" y="10" width="1" height="1" fill="#000"/><rect x="1" y="10" width="3" height="1" fill="#fff"/><rect x="4" y="10" width="1" height="1" fill="#000"/><rect x="5" y="10" width="7" height="1" fill="#F8F020"/><rect x="12" y="10" width="2" height="1" fill="#000"/><rect x="0" y="11" width="1" height="1" fill="#000"/><rect x="1" y="11" width="1" height="1" fill="#fff"/><rect x="2" y="11" width="2" height="1" fill="#808080"/><rect x="4" y="11" width="1" height="1" fill="#000"/><rect x="5" y="11" width="7" height="1" fill="#F8F020"/><rect x="12" y="11" width="1" height="1" fill="#000"/><rect x="0" y="12" width="1" height="1" fill="#000"/><rect x="1" y="12" width="3" height="1" fill="#fff"/><rect x="4" y="12" width="1" height="1" fill="#000"/><rect x="5" y="12" width="2" height="1" fill="#B89810"/><rect x="7" y="12" width="4" height="1" fill="#F8F020"/><rect x="11" y="12" width="1" height="1" fill="#B89810"/><rect x="12" y="12" width="1" height="1" fill="#000"/><rect x="0" y="13" width="1" height="1" fill="#000"/><rect x="1" y="13" width="1" height="1" fill="#fff"/><rect x="2" y="13" width="2" height="1" fill="#808080"/><rect x="4" y="13" width="1" height="1" fill="#fff"/><rect x="5" y="13" width="1" height="1" fill="#000"/><rect x="6" y="13" width="6" height="1" fill="#B89810"/><rect x="12" y="13" width="1" height="1" fill="#000"/><rect x="0" y="14" width="7" height="1" fill="#000"/><rect x="7" y="14" width="4" height="1" fill="#B89810"/><rect x="11" y="14" width="1" height="1" fill="#000"/><rect x="7" y="15" width="4" height="1" fill="#000"/></svg>
<div class="t" style="left:45px;top:110px;line-height:16px;font-weight:bold;letter-spacing:0.3px;color:#1E55C4">Design Groups</div>
<div class="a" style="left:10px;top:130px;width:9px;height:9px;border:1px solid #ACA899;background:#fff"><div class="a" style="left:1px;top:3px;width:5px;height:1px;background:#000"></div><div class="a" style="left:3px;top:1px;width:1px;height:5px;background:#000"></div></div>
<div class="a" style="left:20px;top:134px;width:5px;height:1px;background:repeating-linear-gradient(to right,#A0A0A0 0,#A0A0A0 1px,transparent 1px,transparent 2px)"></div>
<svg class="a" style="left:25px;top:126px" width="16" height="16" shape-rendering="crispEdges"><rect x="0" y="0" width="16" height="1" fill="#000080"/><rect x="0" y="1" width="16" height="1" fill="#000080"/><rect x="0" y="2" width="1" height="1" fill="#000"/><rect x="1" y="2" width="14" height="1" fill="#fff"/><rect x="15" y="2" width="1" height="1" fill="#000"/><rect x="0" y="3" width="1" height="1" fill="#000"/><rect x="1" y="3" width="1" height="1" fill="#fff"/><rect x="2" y="3" width="3" height="1" fill="#808080"/><rect x="5" y="3" width="1" height="1" fill="#fff"/><rect x="6" y="3" width="3" height="1" fill="#808080"/><rect x="9" y="3" width="1" height="1" fill="#fff"/><rect x="10" y="3" width="3" height="1" fill="#808080"/><rect x="13" y="3" width="2" height="1" fill="#fff"/><rect x="15" y="3" width="1" height="1" fill="#000"/><rect x="0" y="4" width="1" height="1" fill="#000"/><rect x="1" y="4" width="14" height="1" fill="#fff"/><rect x="15" y="4" width="1" height="1" fill="#000"/><rect x="0" y="5" width="1" height="1" fill="#000"/><rect x="1" y="5" width="1" height="1" fill="#fff"/><rect x="2" y="5" width="3" height="1" fill="#808080"/><rect x="5" y="5" width="1" height="1" fill="#fff"/><rect x="6" y="5" width="3" height="1" fill="#808080"/><rect x="9" y="5" width="6" height="1" fill="#fff"/><rect x="15" y="5" width="1" height="1" fill="#000"/><rect x="0" y="6" width="1" height="1" fill="#000"/><rect x="1" y="6" width="6" height="1" fill="#fff"/><rect x="7" y="6" width="4" height="1" fill="#000"/><rect x="11" y="6" width="1" height="1" fill="#fff"/><rect x="12" y="6" width="2" height="1" fill="#C0C0C0"/><rect x="14" y="6" width="1" height="1" fill="#fff"/><rect x="15" y="6" width="1" height="1" fill="#000"/><rect x="0" y="7" width="1" height="1" fill="#000"/><rect x="1" y="7" width="1" height="1" fill="#fff"/><rect x="2" y="7" width="2" height="1" fill="#808080"/><rect x="4" y="7" width="2" height="1" fill="#fff"/><rect x="6" y="7" width="1" height="1" fill="#000"/><rect x="7" y="7" width="4" height="1" fill="#00F0F0"/><rect x="11" y="7" width="1" height="1" fill="#000"/><rect x="12" y="7" width="2" height="1" fill="#C0C0C0"/><rect x="14" y="7" width="2" height="1" fill="#000"/><rect x="0" y="8" width="1" height="1" fill="#000"/><rect x="1" y="8" width="4" height="1" fill="#fff"/><rect x="5" y="8" width="1" height="1" fill="#000"/><rect x="6" y="8" width="6" height="1" fill="#00F0F0"/><rect x="12" y="8" width="1" height="1" fill="#000"/><rect x="13" y="8" width="1" height="1" fill="#A0A0A0"/><rect x="14" y="8" width="1" height="1" fill="#000"/><rect x="0" y="9" width="1" height="1" fill="#000"/><rect x="1" y="9" width="1" height="1" fill="#fff"/><rect x="2" y="9" width="2" height="1" fill="#808080"/><rect x="4" y="9" width="1" height="1" fill="#000"/><rect x="5" y="9" width="7" height="1" fill="#00F0F0"/><rect x="12" y="9" width="1" height="1" fill="#000"/><rect x="13" y="9" width="1" height="1" fill="#A0A0A0"/><rect x="14" y="9" width="1" height="1" fill="#000"/><rect x="0" y="10" width="1" height="1" fill="#000"/><rect x="1" y="10" width="3" height="1" fill="#fff"/><rect x="4" y="10" width="1" height="1" fill="#000"/><rect x="5" y="10" width="7" height="1" fill="#00F0F0"/><rect x="12" y="10" width="2" height="1" fill="#000"/><rect x="0" y="11" width="1" height="1" fill="#000"/><rect x="1" y="11" width="1" height="1" fill="#fff"/><rect x="2" y="11" width="2" height="1" fill="#808080"/><rect x="4" y="11" width="1" height="1" fill="#000"/><rect x="5" y="11" width="7" height="1" fill="#00F0F0"/><rect x="12" y="11" width="1" height="1" fill="#000"/><rect x="0" y="12" width="1" height="1" fill="#000"/><rect x="1" y="12" width="3" height="1" fill="#fff"/><rect x="4" y="12" width="1" height="1" fill="#000"/><rect x="5" y="12" width="7" height="1" fill="#00F0F0"/><rect x="12" y="12" width="1" height="1" fill="#000"/><rect x="0" y="13" width="1" height="1" fill="#000"/><rect x="1" y="13" width="1" height="1" fill="#fff"/><rect x="2" y="13" width="2" height="1" fill="#808080"/><rect x="4" y="13" width="1" height="1" fill="#fff"/><rect x="5" y="13" width="1" height="1" fill="#000"/><rect x="6" y="13" width="6" height="1" fill="#00F0F0"/><rect x="12" y="13" width="1" height="1" fill="#000"/><rect x="0" y="14" width="7" height="1" fill="#000"/><rect x="7" y="14" width="4" height="1" fill="#00F0F0"/><rect x="11" y="14" width="1" height="1" fill="#000"/><rect x="7" y="15" width="4" height="1" fill="#000"/></svg>
<div class="t" style="left:45px;top:126px;line-height:16px;font-weight:bold;letter-spacing:0.3px;color:#1E55C4">Change Points</div>
<div class="a" style="left:15px;top:150px;width:10px;height:1px;background:repeating-linear-gradient(to right,#A0A0A0 0,#A0A0A0 1px,transparent 1px,transparent 2px)"></div>
<div class="a" style="left:25px;top:142px;width:185px;height:16px;background:#ECE9D8"></div>
<svg class="a" style="left:25px;top:142px" width="16" height="16" shape-rendering="crispEdges"><rect x="12" y="1" width="2" height="1" fill="#0000E0"/><rect x="11" y="2" width="4" height="1" fill="#0000E0"/><rect x="10" y="3" width="5" height="1" fill="#0000E0"/><rect x="9" y="4" width="2" height="1" fill="#0000E0"/><rect x="13" y="4" width="2" height="1" fill="#0000E0"/><rect x="8" y="5" width="2" height="1" fill="#0000E0"/><rect x="7" y="6" width="2" height="1" fill="#0000E0"/><rect x="0" y="7" width="1" height="1" fill="#0000E0"/><rect x="2" y="7" width="1" height="1" fill="#0000E0"/><rect x="4" y="7" width="1" height="1" fill="#0000E0"/><rect x="6" y="7" width="2" height="1" fill="#0000E0"/><rect x="0" y="8" width="1" height="1" fill="#0000E0"/><rect x="2" y="8" width="1" height="1" fill="#0000E0"/><rect x="4" y="8" width="1" height="1" fill="#0000E0"/><rect x="6" y="8" width="2" height="1" fill="#0000E0"/><rect x="7" y="9" width="2" height="1" fill="#0000E0"/><rect x="8" y="10" width="2" height="1" fill="#0000E0"/><rect x="9" y="11" width="2" height="1" fill="#0000E0"/><rect x="13" y="11" width="2" height="1" fill="#0000E0"/><rect x="10" y="12" width="5" height="1" fill="#0000E0"/><rect x="11" y="13" width="4" height="1" fill="#0000E0"/><rect x="12" y="14" width="2" height="1" fill="#0000E0"/></svg>
<div class="t" style="left:45px;top:142px;line-height:16px;font-weight:bold;letter-spacing:0.3px;color:#000">Designs to Product Relations</div>
<div class="a" style="left:10px;top:162px;width:9px;height:9px;border:1px solid #ACA899;background:#fff"><div class="a" style="left:1px;top:3px;width:5px;height:1px;background:#000"></div><div class="a" style="left:3px;top:1px;width:1px;height:5px;background:#000"></div></div>
<div class="a" style="left:20px;top:166px;width:5px;height:1px;background:repeating-linear-gradient(to right,#A0A0A0 0,#A0A0A0 1px,transparent 1px,transparent 2px)"></div>
<svg class="a" style="left:25px;top:158px" width="16" height="16" shape-rendering="crispEdges"><rect x="0" y="0" width="15" height="1" fill="#000080"/><rect x="0" y="1" width="1" height="1" fill="#000"/><rect x="1" y="1" width="13" height="1" fill="#fff"/><rect x="14" y="1" width="1" height="1" fill="#000"/><rect x="0" y="2" width="1" height="1" fill="#000"/><rect x="1" y="2" width="1" height="1" fill="#fff"/><rect x="2" y="2" width="3" height="1" fill="#808080"/><rect x="5" y="2" width="1" height="1" fill="#fff"/><rect x="6" y="2" width="3" height="1" fill="#808080"/><rect x="9" y="2" width="1" height="1" fill="#fff"/><rect x="10" y="2" width="3" height="1" fill="#808080"/><rect x="13" y="2" width="1" height="1" fill="#fff"/><rect x="14" y="2" width="1" height="1" fill="#000"/><rect x="0" y="3" width="1" height="1" fill="#000"/><rect x="1" y="3" width="13" height="1" fill="#fff"/><rect x="14" y="3" width="1" height="1" fill="#000"/><rect x="0" y="4" width="1" height="1" fill="#000"/><rect x="1" y="4" width="1" height="1" fill="#fff"/><rect x="2" y="4" width="3" height="1" fill="#808080"/><rect x="5" y="4" width="1" height="1" fill="#fff"/><rect x="6" y="4" width="3" height="1" fill="#808080"/><rect x="9" y="4" width="1" height="1" fill="#fff"/><rect x="10" y="4" width="3" height="1" fill="#808080"/><rect x="13" y="4" width="1" height="1" fill="#fff"/><rect x="14" y="4" width="1" height="1" fill="#000"/><rect x="0" y="5" width="1" height="1" fill="#000"/><rect x="1" y="5" width="5" height="1" fill="#fff"/><rect x="6" y="5" width="4" height="1" fill="#000"/><rect x="10" y="5" width="4" height="1" fill="#fff"/><rect x="14" y="5" width="1" height="1" fill="#000"/><rect x="0" y="6" width="1" height="1" fill="#000"/><rect x="1" y="6" width="3" height="1" fill="#fff"/><rect x="4" y="6" width="2" height="1" fill="#000"/><rect x="6" y="6" width="4" height="1" fill="#F0E8C8"/><rect x="10" y="6" width="2" height="1" fill="#000"/><rect x="12" y="6" width="2" height="1" fill="#fff"/><rect x="14" y="6" width="1" height="1" fill="#000"/><rect x="0" y="7" width="1" height="1" fill="#000"/><rect x="1" y="7" width="2" height="1" fill="#fff"/><rect x="3" y="7" width="1" height="1" fill="#000"/><rect x="4" y="7" width="8" height="1" fill="#F0E8C8"/><rect x="12" y="7" width="3" height="1" fill="#000"/><rect x="0" y="8" width="1" height="1" fill="#000"/><rect x="1" y="8" width="1" height="1" fill="#fff"/><rect x="2" y="8" width="1" height="1" fill="#000"/><rect x="3" y="8" width="9" height="1" fill="#780020"/><rect x="12" y="8" width="1" height="1" fill="#000"/><rect x="13" y="8" width="1" height="1" fill="#00F0F0"/><rect x="14" y="8" width="1" height="1" fill="#000"/><rect x="0" y="9" width="1" height="1" fill="#000"/><rect x="1" y="9" width="1" height="1" fill="#fff"/><rect x="2" y="9" width="1" height="1" fill="#000"/><rect x="3" y="9" width="8" height="1" fill="#780020"/><rect x="11" y="9" width="2" height="1" fill="#000"/><rect x="13" y="9" width="1" height="1" fill="#00F0F0"/><rect x="14" y="9" width="2" height="1" fill="#000"/><rect x="0" y="10" width="1" height="1" fill="#000"/><rect x="1" y="10" width="2" height="1" fill="#fff"/><rect x="3" y="10" width="1" height="1" fill="#000"/><rect x="4" y="10" width="11" height="1" fill="#00F0F0"/><rect x="15" y="10" width="1" height="1" fill="#000"/><rect x="0" y="11" width="16" height="1" fill="#000"/><rect x="2" y="12" width="2" height="1" fill="#000"/><rect x="5" y="12" width="2" height="1" fill="#000"/><rect x="11" y="12" width="2" height="1" fill="#000"/><rect x="2" y="13" width="2" height="1" fill="#000"/><rect x="5" y="13" width="2" height="1" fill="#000"/><rect x="11" y="13" width="2" height="1" fill="#000"/></svg>
<div class="t" style="left:45px;top:158px;line-height:16px;font-weight:bold;letter-spacing:0.3px;color:#1E55C4">Current Products &amp; History</div>
<div class="a" style="left:10px;top:178px;width:9px;height:9px;border:1px solid #ACA899;background:#fff"><div class="a" style="left:1px;top:3px;width:5px;height:1px;background:#000"></div><div class="a" style="left:3px;top:1px;width:1px;height:5px;background:#000"></div></div>
<div class="a" style="left:20px;top:182px;width:5px;height:1px;background:repeating-linear-gradient(to right,#A0A0A0 0,#A0A0A0 1px,transparent 1px,transparent 2px)"></div>
<svg class="a" style="left:25px;top:174px" width="16" height="16" shape-rendering="crispEdges"><rect x="0" y="0" width="15" height="1" fill="#505050"/><rect x="0" y="1" width="1" height="1" fill="#000"/><rect x="1" y="1" width="13" height="1" fill="#fff"/><rect x="14" y="1" width="1" height="1" fill="#000"/><rect x="0" y="2" width="1" height="1" fill="#000"/><rect x="1" y="2" width="1" height="1" fill="#fff"/><rect x="2" y="2" width="3" height="1" fill="#808080"/><rect x="5" y="2" width="1" height="1" fill="#fff"/><rect x="6" y="2" width="3" height="1" fill="#808080"/><rect x="9" y="2" width="1" height="1" fill="#fff"/><rect x="10" y="2" width="3" height="1" fill="#808080"/><rect x="13" y="2" width="1" height="1" fill="#fff"/><rect x="14" y="2" width="1" height="1" fill="#000"/><rect x="0" y="3" width="1" height="1" fill="#000"/><rect x="1" y="3" width="13" height="1" fill="#fff"/><rect x="14" y="3" width="1" height="1" fill="#000"/><rect x="0" y="4" width="1" height="1" fill="#000"/><rect x="1" y="4" width="1" height="1" fill="#fff"/><rect x="2" y="4" width="3" height="1" fill="#808080"/><rect x="5" y="4" width="1" height="1" fill="#fff"/><rect x="6" y="4" width="3" height="1" fill="#808080"/><rect x="9" y="4" width="1" height="1" fill="#fff"/><rect x="10" y="4" width="3" height="1" fill="#808080"/><rect x="13" y="4" width="1" height="1" fill="#fff"/><rect x="14" y="4" width="1" height="1" fill="#000"/><rect x="0" y="5" width="1" height="1" fill="#000"/><rect x="1" y="5" width="5" height="1" fill="#fff"/><rect x="6" y="5" width="4" height="1" fill="#000"/><rect x="10" y="5" width="4" height="1" fill="#fff"/><rect x="14" y="5" width="1" height="1" fill="#000"/><rect x="0" y="6" width="1" height="1" fill="#000"/><rect x="1" y="6" width="3" height="1" fill="#fff"/><rect x="4" y="6" width="2" height="1" fill="#000"/><rect x="6" y="6" width="4" height="1" fill="#A0A0A0"/><rect x="10" y="6" width="2" height="1" fill="#000"/><rect x="12" y="6" width="2" height="1" fill="#fff"/><rect x="14" y="6" width="1" height="1" fill="#000"/><rect x="0" y="7" width="1" height="1" fill="#000"/><rect x="1" y="7" width="2" height="1" fill="#fff"/><rect x="3" y="7" width="1" height="1" fill="#000"/><rect x="4" y="7" width="8" height="1" fill="#A0A0A0"/><rect x="12" y="7" width="3" height="1" fill="#000"/><rect x="0" y="8" width="1" height="1" fill="#000"/><rect x="1" y="8" width="1" height="1" fill="#fff"/><rect x="2" y="8" width="1" height="1" fill="#000"/><rect x="3" y="8" width="9" height="1" fill="#808080"/><rect x="12" y="8" width="1" height="1" fill="#000"/><rect x="13" y="8" width="1" height="1" fill="#A0A0A0"/><rect x="14" y="8" width="1" height="1" fill="#000"/><rect x="0" y="9" width="1" height="1" fill="#000"/><rect x="1" y="9" width="1" height="1" fill="#fff"/><rect x="2" y="9" width="1" height="1" fill="#000"/><rect x="3" y="9" width="8" height="1" fill="#808080"/><rect x="11" y="9" width="2" height="1" fill="#000"/><rect x="13" y="9" width="1" height="1" fill="#A0A0A0"/><rect x="14" y="9" width="2" height="1" fill="#000"/><rect x="0" y="10" width="1" height="1" fill="#000"/><rect x="1" y="10" width="2" height="1" fill="#fff"/><rect x="3" y="10" width="1" height="1" fill="#000"/><rect x="4" y="10" width="11" height="1" fill="#A0A0A0"/><rect x="15" y="10" width="1" height="1" fill="#000"/><rect x="0" y="11" width="16" height="1" fill="#000"/><rect x="2" y="12" width="2" height="1" fill="#000"/><rect x="5" y="12" width="2" height="1" fill="#000"/><rect x="11" y="12" width="2" height="1" fill="#000"/><rect x="2" y="13" width="2" height="1" fill="#000"/><rect x="5" y="13" width="2" height="1" fill="#000"/><rect x="11" y="13" width="2" height="1" fill="#000"/></svg>
<div class="t" style="left:45px;top:174px;line-height:16px;font-weight:bold;letter-spacing:0.3px;color:#1E55C4">Archived Products &amp; History</div>
<div class="a" style="left:10px;top:194px;width:9px;height:9px;border:1px solid #ACA899;background:#fff"><div class="a" style="left:1px;top:3px;width:5px;height:1px;background:#000"></div><div class="a" style="left:3px;top:1px;width:1px;height:5px;background:#000"></div></div>
<div class="a" style="left:20px;top:198px;width:5px;height:1px;background:repeating-linear-gradient(to right,#A0A0A0 0,#A0A0A0 1px,transparent 1px,transparent 2px)"></div>
<svg class="a" style="left:25px;top:190px" width="16" height="16" shape-rendering="crispEdges"><rect x="2" y="0" width="7" height="1" fill="#0000E0"/><rect x="2" y="1" width="1" height="1" fill="#0000E0"/><rect x="3" y="1" width="5" height="1" fill="#fff"/><rect x="8" y="1" width="2" height="1" fill="#0000E0"/><rect x="2" y="2" width="1" height="1" fill="#0000E0"/><rect x="3" y="2" width="1" height="1" fill="#fff"/><rect x="4" y="2" width="9" height="1" fill="#0000E0"/><rect x="2" y="3" width="1" height="1" fill="#0000E0"/><rect x="3" y="3" width="1" height="1" fill="#fff"/><rect x="4" y="3" width="1" height="1" fill="#0000E0"/><rect x="5" y="3" width="7" height="1" fill="#fff"/><rect x="12" y="3" width="2" height="1" fill="#0000E0"/><rect x="2" y="4" width="1" height="1" fill="#0000E0"/><rect x="3" y="4" width="1" height="1" fill="#fff"/><rect x="4" y="4" width="1" height="1" fill="#0000E0"/><rect x="5" y="4" width="1" height="1" fill="#fff"/><rect x="6" y="4" width="5" height="1" fill="#0000E0"/><rect x="11" y="4" width="2" height="1" fill="#fff"/><rect x="13" y="4" width="1" height="1" fill="#0000E0"/><rect x="2" y="5" width="1" height="1" fill="#0000E0"/><rect x="3" y="5" width="1" height="1" fill="#fff"/><rect x="4" y="5" width="1" height="1" fill="#0000E0"/><rect x="5" y="5" width="8" height="1" fill="#fff"/><rect x="13" y="5" width="1" height="1" fill="#0000E0"/><rect x="2" y="6" width="1" height="1" fill="#0000E0"/><rect x="3" y="6" width="1" height="1" fill="#fff"/><rect x="4" y="6" width="1" height="1" fill="#0000E0"/><rect x="5" y="6" width="1" height="1" fill="#fff"/><rect x="6" y="6" width="6" height="1" fill="#0000E0"/><rect x="12" y="6" width="1" height="1" fill="#fff"/><rect x="13" y="6" width="1" height="1" fill="#0000E0"/><rect x="2" y="7" width="1" height="1" fill="#0000E0"/><rect x="3" y="7" width="1" height="1" fill="#fff"/><rect x="4" y="7" width="1" height="1" fill="#0000E0"/><rect x="5" y="7" width="8" height="1" fill="#fff"/><rect x="13" y="7" width="1" height="1" fill="#0000E0"/><rect x="2" y="8" width="1" height="1" fill="#0000E0"/><rect x="3" y="8" width="1" height="1" fill="#fff"/><rect x="4" y="8" width="1" height="1" fill="#0000E0"/><rect x="5" y="8" width="1" height="1" fill="#fff"/><rect x="6" y="8" width="6" height="1" fill="#0000E0"/><rect x="12" y="8" width="1" height="1" fill="#fff"/><rect x="13" y="8" width="1" height="1" fill="#0000E0"/><rect x="2" y="9" width="1" height="1" fill="#0000E0"/><rect x="3" y="9" width="1" height="1" fill="#fff"/><rect x="4" y="9" width="1" height="1" fill="#0000E0"/><rect x="5" y="9" width="8" height="1" fill="#fff"/><rect x="13" y="9" width="1" height="1" fill="#0000E0"/><rect x="2" y="10" width="3" height="1" fill="#0000E0"/><rect x="5" y="10" width="1" height="1" fill="#fff"/><rect x="6" y="10" width="6" height="1" fill="#0000E0"/><rect x="12" y="10" width="1" height="1" fill="#fff"/><rect x="13" y="10" width="1" height="1" fill="#0000E0"/><rect x="4" y="11" width="1" height="1" fill="#0000E0"/><rect x="5" y="11" width="8" height="1" fill="#fff"/><rect x="13" y="11" width="1" height="1" fill="#0000E0"/><rect x="4" y="12" width="1" height="1" fill="#0000E0"/><rect x="5" y="12" width="1" height="1" fill="#fff"/><rect x="6" y="12" width="6" height="1" fill="#0000E0"/><rect x="12" y="12" width="1" height="1" fill="#fff"/><rect x="13" y="12" width="1" height="1" fill="#0000E0"/><rect x="4" y="13" width="1" height="1" fill="#0000E0"/><rect x="5" y="13" width="8" height="1" fill="#fff"/><rect x="13" y="13" width="1" height="1" fill="#0000E0"/><rect x="4" y="14" width="10" height="1" fill="#0000E0"/></svg>
<div class="t" style="left:45px;top:190px;line-height:16px;font-weight:bold;letter-spacing:0.3px;color:#1E55C4">Mix Submissions</div>
<div class="a" style="left:10px;top:210px;width:9px;height:9px;border:1px solid #ACA899;background:#fff"><div class="a" style="left:1px;top:3px;width:5px;height:1px;background:#000"></div><div class="a" style="left:3px;top:1px;width:1px;height:5px;background:#000"></div></div>
<div class="a" style="left:20px;top:214px;width:5px;height:1px;background:repeating-linear-gradient(to right,#A0A0A0 0,#A0A0A0 1px,transparent 1px,transparent 2px)"></div>
<svg class="a" style="left:25px;top:206px" width="16" height="16" shape-rendering="crispEdges"><rect x="5" y="0" width="6" height="1" fill="#A0A0A0"/><rect x="12" y="0" width="2" height="1" fill="#A0A0A0"/><rect x="3" y="1" width="2" height="1" fill="#A0A0A0"/><rect x="12" y="1" width="1" height="1" fill="#A0A0A0"/><rect x="14" y="1" width="1" height="1" fill="#A0A0A0"/><rect x="2" y="2" width="1" height="1" fill="#A0A0A0"/><rect x="1" y="3" width="2" height="1" fill="#102868"/><rect x="1" y="4" width="2" height="1" fill="#102868"/><rect x="6" y="4" width="5" height="1" fill="#102868"/><rect x="1" y="5" width="2" height="1" fill="#102868"/><rect x="6" y="5" width="6" height="1" fill="#102868"/><rect x="1" y="6" width="2" height="1" fill="#102868"/><rect x="6" y="6" width="7" height="1" fill="#102868"/><rect x="1" y="7" width="2" height="1" fill="#102868"/><rect x="6" y="7" width="8" height="1" fill="#102868"/><rect x="1" y="8" width="2" height="1" fill="#102868"/><rect x="6" y="8" width="9" height="1" fill="#102868"/><rect x="1" y="9" width="2" height="1" fill="#102868"/><rect x="6" y="9" width="2" height="1" fill="#102868"/><rect x="8" y="9" width="1" height="1" fill="#fff"/><rect x="9" y="9" width="2" height="1" fill="#102868"/><rect x="11" y="9" width="1" height="1" fill="#fff"/><rect x="12" y="9" width="3" height="1" fill="#102868"/><rect x="15" y="9" width="1" height="1" fill="#000"/><rect x="1" y="10" width="2" height="1" fill="#102868"/><rect x="6" y="10" width="2" height="1" fill="#102868"/><rect x="8" y="10" width="1" height="1" fill="#fff"/><rect x="9" y="10" width="2" height="1" fill="#102868"/><rect x="11" y="10" width="1" height="1" fill="#fff"/><rect x="12" y="10" width="3" height="1" fill="#102868"/><rect x="15" y="10" width="1" height="1" fill="#000"/><rect x="1" y="11" width="2" height="1" fill="#102868"/><rect x="6" y="11" width="9" height="1" fill="#102868"/><rect x="15" y="11" width="1" height="1" fill="#000"/><rect x="1" y="12" width="2" height="1" fill="#102868"/><rect x="5" y="12" width="10" height="1" fill="#102868"/><rect x="15" y="12" width="1" height="1" fill="#000"/><rect x="1" y="13" width="2" height="1" fill="#102868"/><rect x="5" y="13" width="10" height="1" fill="#102868"/><rect x="15" y="13" width="1" height="1" fill="#000"/><rect x="1" y="14" width="14" height="1" fill="#102868"/><rect x="15" y="14" width="1" height="1" fill="#000"/><rect x="1" y="15" width="15" height="1" fill="#000"/></svg>
<div class="t" style="left:45px;top:206px;line-height:16px;font-weight:bold;letter-spacing:0.3px;color:#1E55C4">Plants</div>
<div class="a" style="left:10px;top:226px;width:9px;height:9px;border:1px solid #ACA899;background:#fff"><div class="a" style="left:1px;top:3px;width:5px;height:1px;background:#000"></div><div class="a" style="left:3px;top:1px;width:1px;height:5px;background:#000"></div></div>
<div class="a" style="left:20px;top:230px;width:5px;height:1px;background:repeating-linear-gradient(to right,#A0A0A0 0,#A0A0A0 1px,transparent 1px,transparent 2px)"></div>
<svg class="a" style="left:25px;top:223px" width="16" height="16" shape-rendering="crispEdges"><rect x="5" y="0" width="1" height="1" fill="#D8A820"/><rect x="6" y="0" width="1" height="1" fill="#F8F020"/><rect x="4" y="1" width="1" height="1" fill="#D8A820"/><rect x="5" y="1" width="2" height="1" fill="#F8F020"/><rect x="7" y="1" width="1" height="1" fill="#D8A820"/><rect x="4" y="2" width="1" height="1" fill="#D8A820"/><rect x="5" y="2" width="2" height="1" fill="#F8F020"/><rect x="7" y="2" width="1" height="1" fill="#D8A820"/><rect x="3" y="3" width="1" height="1" fill="#D8A820"/><rect x="4" y="3" width="2" height="1" fill="#F8F020"/><rect x="6" y="3" width="3" height="1" fill="#D8A820"/><rect x="3" y="4" width="1" height="1" fill="#D8A820"/><rect x="4" y="4" width="1" height="1" fill="#F8F020"/><rect x="5" y="4" width="1" height="1" fill="#D8A820"/><rect x="6" y="4" width="1" height="1" fill="#F8F020"/><rect x="7" y="4" width="2" height="1" fill="#D8A820"/><rect x="10" y="4" width="6" height="1" fill="#000"/><rect x="2" y="5" width="1" height="1" fill="#D8A820"/><rect x="3" y="5" width="3" height="1" fill="#F8F020"/><rect x="6" y="5" width="3" height="1" fill="#D8A820"/><rect x="9" y="5" width="1" height="1" fill="#000"/><rect x="10" y="5" width="3" height="1" fill="#505050"/><rect x="13" y="5" width="1" height="1" fill="#A0A0A0"/><rect x="14" y="5" width="1" height="1" fill="#505050"/><rect x="15" y="5" width="1" height="1" fill="#000"/><rect x="1" y="6" width="2" height="1" fill="#D8A820"/><rect x="3" y="6" width="3" height="1" fill="#F8F020"/><rect x="6" y="6" width="4" height="1" fill="#D8A820"/><rect x="10" y="6" width="1" height="1" fill="#000"/><rect x="11" y="6" width="1" height="1" fill="#505050"/><rect x="12" y="6" width="2" height="1" fill="#A0A0A0"/><rect x="14" y="6" width="1" height="1" fill="#505050"/><rect x="15" y="6" width="1" height="1" fill="#000"/><rect x="0" y="7" width="9" height="1" fill="#D8A820"/><rect x="9" y="7" width="1" height="1" fill="#000"/><rect x="10" y="7" width="1" height="1" fill="#505050"/><rect x="11" y="7" width="1" height="1" fill="#A0A0A0"/><rect x="12" y="7" width="3" height="1" fill="#505050"/><rect x="15" y="7" width="1" height="1" fill="#000"/><rect x="4" y="8" width="3" height="1" fill="#000"/><rect x="10" y="8" width="1" height="1" fill="#000"/><rect x="11" y="8" width="3" height="1" fill="#505050"/><rect x="14" y="8" width="1" height="1" fill="#000"/><rect x="3" y="9" width="1" height="1" fill="#000"/><rect x="4" y="9" width="3" height="1" fill="#30D030"/><rect x="7" y="9" width="1" height="1" fill="#000"/><rect x="11" y="9" width="3" height="1" fill="#505050"/><rect x="14" y="9" width="1" height="1" fill="#000"/><rect x="2" y="10" width="1" height="1" fill="#000"/><rect x="3" y="10" width="5" height="1" fill="#30D030"/><rect x="8" y="10" width="1" height="1" fill="#000"/><rect x="12" y="10" width="2" height="1" fill="#000"/><rect x="1" y="11" width="1" height="1" fill="#000"/><rect x="2" y="11" width="7" height="1" fill="#30D030"/><rect x="9" y="11" width="1" height="1" fill="#000"/><rect x="1" y="12" width="1" height="1" fill="#000"/><rect x="2" y="12" width="7" height="1" fill="#30D030"/><rect x="9" y="12" width="1" height="1" fill="#000"/><rect x="1" y="13" width="9" height="1" fill="#000"/></svg>
<div class="t" style="left:45px;top:222px;line-height:16px;font-weight:bold;letter-spacing:0.3px;color:#1E55C4">Materials</div>
<div class="a" style="left:10px;top:242px;width:9px;height:9px;border:1px solid #ACA899;background:#fff"><div class="a" style="left:1px;top:3px;width:5px;height:1px;background:#000"></div><div class="a" style="left:3px;top:1px;width:1px;height:5px;background:#000"></div></div>
<div class="a" style="left:20px;top:246px;width:5px;height:1px;background:repeating-linear-gradient(to right,#A0A0A0 0,#A0A0A0 1px,transparent 1px,transparent 2px)"></div>
<svg class="a" style="left:25px;top:240px" width="16" height="16" shape-rendering="crispEdges"><rect x="4" y="0" width="2" height="1" fill="#000"/><rect x="3" y="1" width="1" height="1" fill="#000"/><rect x="4" y="1" width="2" height="1" fill="#fff"/><rect x="6" y="1" width="1" height="1" fill="#000"/><rect x="2" y="2" width="1" height="1" fill="#000"/><rect x="3" y="2" width="4" height="1" fill="#fff"/><rect x="7" y="2" width="1" height="1" fill="#000"/><rect x="1" y="3" width="1" height="1" fill="#000"/><rect x="2" y="3" width="6" height="1" fill="#fff"/><rect x="8" y="3" width="1" height="1" fill="#000"/><rect x="0" y="4" width="1" height="1" fill="#000"/><rect x="1" y="4" width="8" height="1" fill="#fff"/><rect x="9" y="4" width="1" height="1" fill="#000"/><rect x="1" y="5" width="1" height="1" fill="#000"/><rect x="2" y="5" width="6" height="1" fill="#fff"/><rect x="8" y="5" width="1" height="1" fill="#000"/><rect x="10" y="5" width="6" height="1" fill="#000"/><rect x="2" y="6" width="2" height="1" fill="#000"/><rect x="4" y="6" width="2" height="1" fill="#fff"/><rect x="6" y="6" width="2" height="1" fill="#000"/><rect x="9" y="6" width="1" height="1" fill="#000"/><rect x="10" y="6" width="5" height="1" fill="#fff"/><rect x="15" y="6" width="1" height="1" fill="#000"/><rect x="3" y="7" width="1" height="1" fill="#000"/><rect x="4" y="7" width="2" height="1" fill="#fff"/><rect x="6" y="7" width="1" height="1" fill="#000"/><rect x="9" y="7" width="1" height="1" fill="#000"/><rect x="10" y="7" width="5" height="1" fill="#fff"/><rect x="15" y="7" width="1" height="1" fill="#000"/><rect x="3" y="8" width="1" height="1" fill="#000"/><rect x="4" y="8" width="2" height="1" fill="#fff"/><rect x="6" y="8" width="1" height="1" fill="#000"/><rect x="10" y="8" width="1" height="1" fill="#000"/><rect x="11" y="8" width="3" height="1" fill="#fff"/><rect x="14" y="8" width="1" height="1" fill="#000"/><rect x="3" y="9" width="1" height="1" fill="#000"/><rect x="4" y="9" width="2" height="1" fill="#fff"/><rect x="6" y="9" width="1" height="1" fill="#000"/><rect x="10" y="9" width="1" height="1" fill="#000"/><rect x="11" y="9" width="3" height="1" fill="#fff"/><rect x="14" y="9" width="1" height="1" fill="#000"/><rect x="2" y="10" width="1" height="1" fill="#000"/><rect x="3" y="10" width="4" height="1" fill="#fff"/><rect x="7" y="10" width="1" height="1" fill="#000"/><rect x="11" y="10" width="3" height="1" fill="#000"/><rect x="1" y="11" width="1" height="1" fill="#000"/><rect x="2" y="11" width="6" height="1" fill="#fff"/><rect x="8" y="11" width="1" height="1" fill="#000"/><rect x="1" y="12" width="1" height="1" fill="#000"/><rect x="2" y="12" width="6" height="1" fill="#fff"/><rect x="8" y="12" width="1" height="1" fill="#000"/><rect x="1" y="13" width="8" height="1" fill="#000"/></svg>
<div class="t" style="left:45px;top:238px;line-height:16px;font-weight:bold;letter-spacing:0.3px;color:#1E55C4">Virtual Materials</div>
<div class="a" style="left:10px;top:258px;width:9px;height:9px;border:1px solid #ACA899;background:#fff"><div class="a" style="left:1px;top:3px;width:5px;height:1px;background:#000"></div><div class="a" style="left:3px;top:1px;width:1px;height:5px;background:#000"></div></div>
<div class="a" style="left:20px;top:262px;width:5px;height:1px;background:repeating-linear-gradient(to right,#A0A0A0 0,#A0A0A0 1px,transparent 1px,transparent 2px)"></div>
<svg class="a" style="left:25px;top:254px" width="16" height="16" shape-rendering="crispEdges"><rect x="2" y="0" width="7" height="1" fill="#0000E0"/><rect x="2" y="1" width="1" height="1" fill="#0000E0"/><rect x="3" y="1" width="5" height="1" fill="#fff"/><rect x="8" y="1" width="2" height="1" fill="#0000E0"/><rect x="2" y="2" width="1" height="1" fill="#0000E0"/><rect x="3" y="2" width="1" height="1" fill="#fff"/><rect x="4" y="2" width="9" height="1" fill="#0000E0"/><rect x="2" y="3" width="1" height="1" fill="#0000E0"/><rect x="3" y="3" width="1" height="1" fill="#fff"/><rect x="4" y="3" width="1" height="1" fill="#0000E0"/><rect x="5" y="3" width="7" height="1" fill="#fff"/><rect x="12" y="3" width="2" height="1" fill="#0000E0"/><rect x="2" y="4" width="1" height="1" fill="#0000E0"/><rect x="3" y="4" width="1" height="1" fill="#fff"/><rect x="4" y="4" width="1" height="1" fill="#0000E0"/><rect x="5" y="4" width="1" height="1" fill="#fff"/><rect x="6" y="4" width="5" height="1" fill="#0000E0"/><rect x="11" y="4" width="2" height="1" fill="#fff"/><rect x="13" y="4" width="1" height="1" fill="#0000E0"/><rect x="2" y="5" width="1" height="1" fill="#0000E0"/><rect x="3" y="5" width="1" height="1" fill="#fff"/><rect x="4" y="5" width="1" height="1" fill="#0000E0"/><rect x="5" y="5" width="8" height="1" fill="#fff"/><rect x="13" y="5" width="1" height="1" fill="#0000E0"/><rect x="2" y="6" width="1" height="1" fill="#0000E0"/><rect x="3" y="6" width="1" height="1" fill="#fff"/><rect x="4" y="6" width="1" height="1" fill="#0000E0"/><rect x="5" y="6" width="1" height="1" fill="#fff"/><rect x="6" y="6" width="6" height="1" fill="#0000E0"/><rect x="12" y="6" width="1" height="1" fill="#fff"/><rect x="13" y="6" width="1" height="1" fill="#0000E0"/><rect x="2" y="7" width="1" height="1" fill="#0000E0"/><rect x="3" y="7" width="1" height="1" fill="#fff"/><rect x="4" y="7" width="1" height="1" fill="#0000E0"/><rect x="5" y="7" width="8" height="1" fill="#fff"/><rect x="13" y="7" width="1" height="1" fill="#0000E0"/><rect x="2" y="8" width="1" height="1" fill="#0000E0"/><rect x="3" y="8" width="1" height="1" fill="#fff"/><rect x="4" y="8" width="1" height="1" fill="#0000E0"/><rect x="5" y="8" width="1" height="1" fill="#fff"/><rect x="6" y="8" width="6" height="1" fill="#0000E0"/><rect x="12" y="8" width="1" height="1" fill="#fff"/><rect x="13" y="8" width="1" height="1" fill="#0000E0"/><rect x="2" y="9" width="1" height="1" fill="#0000E0"/><rect x="3" y="9" width="1" height="1" fill="#fff"/><rect x="4" y="9" width="1" height="1" fill="#0000E0"/><rect x="5" y="9" width="8" height="1" fill="#fff"/><rect x="13" y="9" width="1" height="1" fill="#0000E0"/><rect x="2" y="10" width="3" height="1" fill="#0000E0"/><rect x="5" y="10" width="1" height="1" fill="#fff"/><rect x="6" y="10" width="6" height="1" fill="#0000E0"/><rect x="12" y="10" width="1" height="1" fill="#fff"/><rect x="13" y="10" width="1" height="1" fill="#0000E0"/><rect x="4" y="11" width="1" height="1" fill="#0000E0"/><rect x="5" y="11" width="8" height="1" fill="#fff"/><rect x="13" y="11" width="1" height="1" fill="#0000E0"/><rect x="4" y="12" width="1" height="1" fill="#0000E0"/><rect x="5" y="12" width="1" height="1" fill="#fff"/><rect x="6" y="12" width="6" height="1" fill="#0000E0"/><rect x="12" y="12" width="1" height="1" fill="#fff"/><rect x="13" y="12" width="1" height="1" fill="#0000E0"/><rect x="4" y="13" width="1" height="1" fill="#0000E0"/><rect x="5" y="13" width="8" height="1" fill="#fff"/><rect x="13" y="13" width="1" height="1" fill="#0000E0"/><rect x="4" y="14" width="10" height="1" fill="#0000E0"/></svg>
<div class="t" style="left:45px;top:254px;line-height:16px;font-weight:bold;letter-spacing:0.3px;color:#1E55C4">Reports</div>


<!-- filter panel -->
<div class="a" style="left:10px;top:493px;width:12px;height:20px;background:#ECE9D8;box-shadow:inset 1px 1px #fff"></div>
<div class="a" style="left:12px;top:501px;width:0;height:0;border-left:3px solid transparent;border-right:3px solid transparent;border-bottom:3px solid #000;left:13px;top:500px"></div>
<div class="a" style="left:10px;top:513px;width:13px;height:7px;background:#FFFFE7;border-left:1px solid #000;border-right:1px solid #000"></div>
<div class="ed" style="left:22px;top:493px;width:136px;height:21px"></div>
<div class="t" style="left:26px;top:498px">Default</div>
<div class="rb" style="left:141px;top:495px;width:16px;height:17px"><div class="arr" style="left:4px;top:7px"></div></div>
<div class="rb" style="left:160px;top:493px;width:22px;height:22px;line-height:23px">R</div>
<div class="rb" style="left:183px;top:493px;width:23px;height:22px;line-height:24px;letter-spacing:1px">...</div>
<div class="a" style="left:10px;top:519px;width:196px;height:119px;border:1px solid #000;background:#FFFFE7"></div>
<div class="lab" style="left:21px;top:536px;width:65px;letter-spacing:0.4px">Search</div>
<div class="ed" style="left:92px;top:533px;width:71px;height:20px"></div>
<div class="rb" style="left:146px;top:536px;width:16px;height:16px"><div class="arr" style="left:4px;top:6px"></div></div>
<div class="rb" style="left:165px;top:533px;width:16px;height:20px;line-height:19px">S</div>
<div class="rb" style="left:182px;top:533px;width:17px;height:20px;line-height:19px">D</div>
<div class="lab" style="left:21px;top:558px;width:66px;letter-spacing:-0.2px">Plants =</div>
<div class="ed" style="left:91px;top:555px;width:89px;height:18px"></div>
<div class="t" style="left:94px;top:559px;font-size:10px;letter-spacing:0.2px">'XBO','XGA','XHE'</div>
<div class="rb" style="left:181px;top:555px;width:18px;height:18px;line-height:19px">...</div>
<div class="lab" style="left:21px;top:579px;width:66px">Groups =</div>
<div class="ed" style="left:91px;top:575px;width:89px;height:18px"></div>
<div class="rb" style="left:181px;top:575px;width:18px;height:18px;line-height:19px">...</div>
<div class="lab" style="left:21px;top:599px;width:66px">Products =</div>
<div class="ed" style="left:91px;top:595px;width:89px;height:18px"></div>
<div class="t" style="left:94px;top:599px;font-size:10px;letter-spacing:0.25px">'ST32-20-BS'</div>
<div class="rb" style="left:181px;top:595px;width:18px;height:18px;line-height:19px">...</div>
<div class="lab" style="left:21px;top:619px;width:66px">Grades =</div>
<div class="ed" style="left:91px;top:615px;width:89px;height:18px"></div>
<div class="rb" style="left:181px;top:615px;width:18px;height:18px;line-height:19px">...</div>

<!-- right panel -->
<div class="sunk" style="left:217px;top:76px;width:672px;height:566px"><div class="in" style="background:#ECE9D8"></div></div>


<!-- right panel top -->
<div class="t" style="left:221px;top:83px">View:</div>
<div class="ed" style="left:254px;top:78px;width:155px;height:21px"></div>
<div class="t" style="left:257px;top:83px">Details</div>
<div class="rb" style="left:390px;top:80px;width:17px;height:18px"><div class="arr" style="left:5px;top:7px"></div></div>
<div class="rb" style="left:417px;top:78px;width:63px;height:21px;line-height:20px">Show Mix</div>
<div class="rb" style="left:482px;top:78px;width:94px;height:21px;line-height:20px">Show Properties</div>
<div class="cb" style="left:636px;top:82px"></div>
<div class="t" style="left:653px;top:83px">Costs</div>
<div class="cb" style="left:695px;top:82px"></div>
<div class="t" style="left:712px;top:83px">Extra Materials</div>
<div class="cb" style="left:797px;top:82px"><svg class="a" style="left:3px;top:3px" width="7" height="7"><path d="M6 0h1v3h-1v1h-1v1h-1v1h-1v1h-1v-1h-1v-1h-1v-3h1v1h1v1h1v-1h1v-1h1v-1h1z" fill="#000"/></svg></div>
<div class="t" style="left:814px;top:83px">Integrity</div>
<div class="cb" style="left:797px;top:98px"><svg class="a" style="left:3px;top:3px" width="7" height="7"><path d="M6 0h1v3h-1v1h-1v1h-1v1h-1v1h-1v-1h-1v-1h-1v-3h1v1h1v1h1v-1h1v-1h1v-1h1z" fill="#000"/></svg></div>
<div class="t" style="left:814px;top:99px;letter-spacing:0.2px">(failures only)</div>
<div class="rb" style="left:221px;top:104px;width:37px;height:21px;line-height:20px">Add</div>
<div class="rb" style="left:261px;top:104px;width:39px;height:21px;line-height:20px">Copy</div>
<div class="rb" style="left:303px;top:104px;width:41px;height:21px;line-height:20px">Delete</div>
<div class="rb" style="left:347px;top:104px;width:88px;height:21px;line-height:20px">Add Alternative</div>
<div class="rb" style="left:440px;top:104px;width:78px;height:21px;line-height:20px">Make Primary</div>
<div class="rb" style="left:522px;top:104px;width:120px;height:21px;line-height:20px">Change Cement Level</div>
<div class="rb" style="left:645px;top:104px;width:65px;height:21px;line-height:20px">Save CSV</div>
<div class="rb" style="left:715px;top:104px;width:73px;height:21px;line-height:20px">Select All</div>
<svg class="a" style="left:789px;top:90px" width="99" height="31"><ellipse cx="49" cy="15" rx="47.5" ry="13.5" fill="none" stroke="#FF0000" stroke-width="1" shape-rendering="crispEdges"/></svg>
<div class="a" style="left:219px;top:129px;width:669px;height:1px;background:#ACA899"></div>
<div class="a" style="left:219px;top:130px;width:669px;height:1px;background:#fff"></div>

<!-- grid -->
<div class="t" style="left:221px;top:139px">Client</div>
<div class="t" style="left:274px;top:139px">Project</div>
<div class="t" style="left:327px;top:139px">Plant</div>
<div class="t" style="left:379px;top:139px">Product Code</div>
<div class="t" style="left:501px;top:139px">Alt</div>
<div class="a" style="left:519px;top:136px;width:29px;height:14px;overflow:hidden"><div class="t" style="right:0;top:0;font-size:8.5px;font-weight:normal;letter-spacing:0px;word-spacing:1.5px;line-height:14px;transform:scaleX(0.86);transform-origin:100% 0">Cem Min</div></div>
<div class="a" style="left:552px;top:136px;width:29px;height:14px;overflow:hidden"><div class="t" style="right:0;top:0;font-size:8.5px;font-weight:normal;letter-spacing:0px;word-spacing:1.5px;line-height:14px;transform:scaleX(0.86);transform-origin:100% 0">Cem Max</div></div>
<div class="a" style="left:585px;top:136px;width:29px;height:14px;overflow:hidden"><div class="t" style="right:0;top:0;font-size:8.5px;font-weight:normal;letter-spacing:0px;word-spacing:1.5px;line-height:14px;transform:scaleX(0.86);transform-origin:100% 0">Cem Act</div></div>
<div class="a" style="left:618px;top:136px;width:29px;height:14px;overflow:hidden"><div class="t" style="right:0;top:0;font-size:8.5px;font-weight:normal;letter-spacing:0px;word-spacing:1.5px;line-height:14px;transform:scaleX(0.86);transform-origin:100% 0">Cem Min</div></div>
<div class="a" style="left:651px;top:136px;width:29px;height:14px;overflow:hidden"><div class="t" style="right:0;top:0;font-size:8.5px;font-weight:normal;letter-spacing:0px;word-spacing:1.5px;line-height:14px;transform:scaleX(0.86);transform-origin:100% 0">Cem Max</div></div>
<div class="a" style="left:684px;top:136px;width:29px;height:14px;overflow:hidden"><div class="t" style="right:0;top:0;font-size:8.5px;font-weight:normal;letter-spacing:0px;word-spacing:1.5px;line-height:14px;transform:scaleX(0.86);transform-origin:100% 0">Cem Act</div></div>
<div class="a" style="left:717px;top:136px;width:29px;height:14px;overflow:hidden"><div class="t" style="right:0;top:0;font-size:8.5px;font-weight:normal;letter-spacing:0px;word-spacing:1.5px;line-height:14px;transform:scaleX(0.86);transform-origin:100% 0">Ash Min</div></div>
<div class="a" style="left:750px;top:136px;width:29px;height:14px;overflow:hidden"><div class="t" style="right:0;top:0;font-size:8.5px;font-weight:normal;letter-spacing:0px;word-spacing:1.5px;line-height:14px;transform:scaleX(0.86);transform-origin:100% 0">Ash Max</div></div>
<div class="a" style="left:783px;top:136px;width:29px;height:14px;overflow:hidden"><div class="t" style="right:0;top:0;font-size:8.5px;font-weight:normal;letter-spacing:0px;word-spacing:1.5px;line-height:14px;transform:scaleX(0.86);transform-origin:100% 0">Ash Act</div></div>
<div class="a" style="left:816px;top:136px;width:29px;height:14px;overflow:hidden"><div class="t" style="right:0;top:0;font-size:8.5px;font-weight:normal;letter-spacing:0px;word-spacing:1.5px;line-height:14px;transform:scaleX(0.86);transform-origin:100% 0">Rat Min</div></div>
<div class="a" style="left:849px;top:136px;width:29px;height:14px;overflow:hidden"><div class="t" style="right:0;top:0;font-size:8.5px;font-weight:normal;letter-spacing:0px;word-spacing:1.5px;line-height:14px;transform:scaleX(0.86);transform-origin:100% 0">Rat Max</div></div>
<div class="a" style="left:518px;top:167px;width:370px;height:118px;background:#fff"></div>
<div class="a" style="left:584px;top:167px;width:32px;height:118px;background:#FF8080"></div>
<div class="a" style="left:683px;top:167px;width:32px;height:118px;background:#FFFFE0"></div>
<div class="a" style="left:782px;top:167px;width:32px;height:118px;background:#FFFFE0"></div>
<div class="a" style="left:881px;top:167px;width:7px;height:118px;background:#FFFFE0"></div>
<div class="a" style="left:550px;top:167px;width:1px;height:118px;background:#C0C0C0"></div>
<div class="a" style="left:583px;top:167px;width:1px;height:118px;background:#C0C0C0"></div>
<div class="a" style="left:616px;top:167px;width:1px;height:118px;background:#C0C0C0"></div>
<div class="a" style="left:649px;top:167px;width:1px;height:118px;background:#C0C0C0"></div>
<div class="a" style="left:682px;top:167px;width:1px;height:118px;background:#C0C0C0"></div>
<div class="a" style="left:715px;top:167px;width:1px;height:118px;background:#C0C0C0"></div>
<div class="a" style="left:748px;top:167px;width:1px;height:118px;background:#C0C0C0"></div>
<div class="a" style="left:781px;top:167px;width:1px;height:118px;background:#C0C0C0"></div>
<div class="a" style="left:814px;top:167px;width:1px;height:118px;background:#C0C0C0"></div>
<div class="a" style="left:847px;top:167px;width:1px;height:118px;background:#C0C0C0"></div>
<div class="a" style="left:880px;top:167px;width:1px;height:118px;background:#C0C0C0"></div>
<div class="a" style="left:518px;top:183px;width:370px;height:1px;background:#C0C0C0"></div>
<div class="a" style="left:518px;top:200px;width:370px;height:1px;background:#C0C0C0"></div>
<div class="a" style="left:518px;top:217px;width:370px;height:1px;background:#C0C0C0"></div>
<div class="a" style="left:518px;top:234px;width:370px;height:1px;background:#C0C0C0"></div>
<div class="a" style="left:518px;top:251px;width:370px;height:1px;background:#C0C0C0"></div>
<div class="a" style="left:518px;top:268px;width:370px;height:1px;background:#C0C0C0"></div>
<div class="a" style="left:218px;top:285px;width:670px;height:1px;background:#000"></div>
<div class="t" style="left:327px;top:169px;color:#FF0000">XBO</div>
<div class="t" style="left:380px;top:169px;color:#FF0000">ST32-20-BS</div>
<div class="t" style="left:500px;top:169px;color:#FF0000">02</div>
<div class="t" style="left:517px;width:30px;text-align:right;top:169px">340</div>
<div class="t" style="left:550px;width:30px;text-align:right;top:169px">350</div>
<div class="t" style="left:583px;width:30px;text-align:right;top:169px">330</div>
<div class="t" style="left:682px;width:30px;text-align:right;top:169px">330</div>
<div class="t" style="left:781px;width:30px;text-align:right;top:169px">0</div>
<div class="t" style="left:327px;top:186px;color:#FF0000">XBO</div>
<div class="t" style="left:380px;top:186px;color:#FF0000">ST32-20-BS</div>
<div class="t" style="left:500px;top:186px;color:#FF0000">01</div>
<div class="t" style="left:517px;width:30px;text-align:right;top:186px">340</div>
<div class="t" style="left:550px;width:30px;text-align:right;top:186px">350</div>
<div class="t" style="left:583px;width:30px;text-align:right;top:186px">360</div>
<div class="t" style="left:682px;width:30px;text-align:right;top:186px">260</div>
<div class="t" style="left:781px;width:30px;text-align:right;top:186px">100</div>
<div class="t" style="left:327px;top:203px;color:#FF0000">XGA</div>
<div class="t" style="left:380px;top:203px;color:#FF0000">ST32-20-BS</div>
<div class="t" style="left:500px;top:203px;color:#FF0000">02</div>
<div class="t" style="left:517px;width:30px;text-align:right;top:203px">340</div>
<div class="t" style="left:550px;width:30px;text-align:right;top:203px">350</div>
<div class="t" style="left:583px;width:30px;text-align:right;top:203px">330</div>
<div class="t" style="left:682px;width:30px;text-align:right;top:203px">330</div>
<div class="t" style="left:781px;width:30px;text-align:right;top:203px">0</div>
<div class="t" style="left:327px;top:220px;color:#FF0000">XGA</div>
<div class="t" style="left:380px;top:220px;color:#FF0000">ST32-20-BS</div>
<div class="t" style="left:500px;top:220px;color:#FF0000">01</div>
<div class="t" style="left:517px;width:30px;text-align:right;top:220px">340</div>
<div class="t" style="left:550px;width:30px;text-align:right;top:220px">350</div>
<div class="t" style="left:583px;width:30px;text-align:right;top:220px">360</div>
<div class="t" style="left:682px;width:30px;text-align:right;top:220px">260</div>
<div class="t" style="left:781px;width:30px;text-align:right;top:220px">100</div>
<div class="t" style="left:327px;top:237px;color:#FF0000">XHE</div>
<div class="t" style="left:380px;top:237px;color:#FF0000">ST32-20-BS</div>
<div class="t" style="left:500px;top:237px;color:#FF0000">01</div>
<div class="t" style="left:517px;width:30px;text-align:right;top:237px">340</div>
<div class="t" style="left:550px;width:30px;text-align:right;top:237px">350</div>
<div class="t" style="left:583px;width:30px;text-align:right;top:237px">360</div>
<div class="t" style="left:682px;width:30px;text-align:right;top:237px">260</div>
<div class="t" style="left:781px;width:30px;text-align:right;top:237px">100</div>
<div class="t" style="left:327px;top:254px;color:#FF0000">XJE</div>
<div class="t" style="left:380px;top:254px;color:#FF0000">ST32-20-BS</div>
<div class="t" style="left:500px;top:254px;color:#FF0000">01</div>
<div class="t" style="left:517px;width:30px;text-align:right;top:254px">340</div>
<div class="t" style="left:550px;width:30px;text-align:right;top:254px">350</div>
<div class="t" style="left:583px;width:30px;text-align:right;top:254px">360</div>
<div class="t" style="left:682px;width:30px;text-align:right;top:254px">260</div>
<div class="t" style="left:781px;width:30px;text-align:right;top:254px">100</div>
<div class="t" style="left:327px;top:271px;color:#FF0000">XJE</div>
<div class="t" style="left:380px;top:271px;color:#FF0000">ST32-20-BS</div>
<div class="t" style="left:500px;top:271px;color:#FF0000">02</div>
<div class="t" style="left:517px;width:30px;text-align:right;top:271px">340</div>
<div class="t" style="left:550px;width:30px;text-align:right;top:271px">350</div>
<div class="t" style="left:583px;width:30px;text-align:right;top:271px">330</div>
<div class="t" style="left:682px;width:30px;text-align:right;top:271px">330</div>
<div class="t" style="left:781px;width:30px;text-align:right;top:271px">0</div>

<!-- scrollbar -->
<div class="a" style="left:219px;top:619px;width:668px;height:17px;background-color:#F4F2EA;background-image:repeating-conic-gradient(#fff 0 25%,#ECE9D8 0 50%);background-size:2px 2px"></div>
<div class="scb" style="left:219px;top:619px;width:17px;height:17px"><div class="a" style="left:5px;top:5px;width:0;height:0;border-top:4px solid transparent;border-bottom:4px solid transparent;border-right:4px solid #000"></div></div>
<div class="scb" style="left:691px;top:619px;width:17px;height:17px"></div>
<div class="scb" style="left:870px;top:619px;width:17px;height:17px"><div class="a" style="left:7px;top:5px;width:0;height:0;border-top:4px solid transparent;border-bottom:4px solid transparent;border-left:4px solid #000"></div></div>

<!-- status bar -->
<div class="sb" style="left:4px;width:134px"></div>
<div class="sb" style="left:441px;width:118px">Server: ADLD0015</div>
<div class="sb" style="left:562px;width:95px">User: sautnerm</div>
<div class="sb" style="left:659px;width:66px;padding-left:6px;letter-spacing:0.65px">6/06/2006</div>
<div class="sb" style="left:727px;width:52px;padding-left:6px">3:18 PM</div>
<div class="sb" style="left:781px;width:32px;padding-left:3px;letter-spacing:-0.5px;color:#ACA899">CAPS</div>
<div class="sb" style="left:814px;width:31px;padding-left:3px">NUM</div>
<div class="sb" style="left:846px;width:24px;padding-left:3px;color:#ACA899">INS</div>
<svg class="a" style="left:875px;top:646px" width="14" height="14"><path d="M13 1L1 13M13 5L5 13M13 9L9 13" stroke="#ACA899" stroke-width="1"/><path d="M13 2L2 13M13 6L6 13M13 10L10 13" stroke="#fff" stroke-width="1"/></svg>

</body></html>
